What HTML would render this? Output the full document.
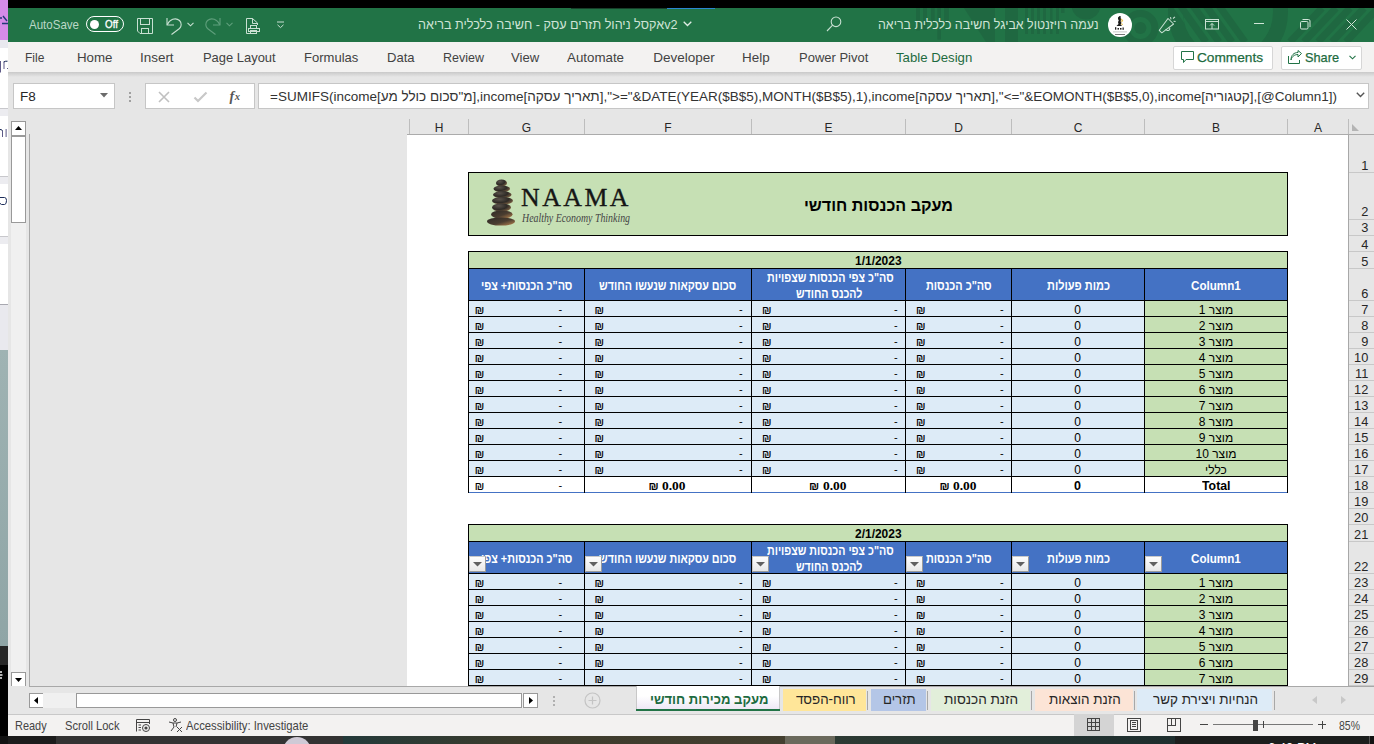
<!DOCTYPE html>
<html><head><meta charset="utf-8"><style>
html,body{margin:0;padding:0;}
body{width:1374px;height:744px;position:relative;overflow:hidden;background:#000;font-family:'Liberation Sans', sans-serif;}
.t{position:absolute;white-space:nowrap;transform-origin:0 0;}
svg{position:absolute;overflow:visible;}
</style></head><body>
<div style="position:absolute;left:0px;top:0px;width:8px;height:40px;background:#d58be8;"></div>
<svg style="left:0;top:14px" width="8" height="12" viewBox="0 0 8 12"><path d="M0 4 L2 4 M3 2 L7 7 M2 9.5 H8" stroke="#233a78" stroke-width="1.4"/></svg>
<div style="position:absolute;left:0px;top:40px;width:8px;height:8px;background:#e9e9ef;"></div>
<div style="position:absolute;left:0px;top:48px;width:8px;height:302px;background:#ffffff;"></div>
<svg style="left:0;top:55px" width="8" height="24" viewBox="0 0 8 24"><g fill="#5e5a88"><rect x="0" y="6" width="1" height="11.5"/><rect x="3.5" y="6.5" width="1" height="7.5"/><rect x="7" y="13" width="1" height="1"/></g><path d="M3.8 7 Q5 6 7.5 6.2" stroke="#102050" stroke-width="1" fill="none"/></svg>
<div style="position:absolute;left:0px;top:108px;width:8px;height:1px;background:#c8c8cc;"></div>
<div style="position:absolute;left:0px;top:109px;width:8px;height:7px;background:#ececf0;"></div>
<svg style="left:0;top:120px" width="8" height="24" viewBox="0 0 8 24"><g fill="#5e5a88"><rect x="2" y="11" width="1" height="6"/><rect x="5.6" y="9" width="1" height="8"/></g><path d="M0 9.5 Q2 9.2 2.5 11" stroke="#102050" stroke-width="1" fill="none"/></svg>
<div style="position:absolute;left:0px;top:176px;width:8px;height:1px;background:#c8c8cc;"></div>
<div style="position:absolute;left:0px;top:177px;width:8px;height:7px;background:#ececf0;"></div>
<svg style="left:0;top:188px" width="8" height="24" viewBox="0 0 8 24"><path d="M0 9.5 H4.5 Q6.5 9.5 6.5 12.5 Q6.5 16.5 4.5 16.5 H1.5 Q0.5 16.5 0 15" stroke="#1c2d5a" stroke-width="1" fill="none"/></svg>
<div style="position:absolute;left:0px;top:236px;width:8px;height:1px;background:#c8c8cc;"></div>
<div style="position:absolute;left:0px;top:237px;width:8px;height:7px;background:#ececf0;"></div>
<div style="position:absolute;left:0px;top:304px;width:8px;height:1px;background:#a8a8b0;"></div>
<div style="position:absolute;left:0px;top:305px;width:8px;height:45px;background:#e9e9ee;"></div>
<div style="position:absolute;left:0px;top:350px;width:8px;height:296px;background:linear-gradient(#9fb3b3,#8fa5a6);"></div>
<div style="position:absolute;left:0px;top:646px;width:8px;height:19px;background:#262626;"></div>
<div style="position:absolute;left:0px;top:665px;width:8px;height:79px;background:#000;"></div>
<svg style="left:0;top:670px" width="8" height="12" viewBox="0 0 8 12"><path d="M0 2 H2 M0 5 H2.5 M0 8 H2" stroke="#eee" stroke-width="1.6"/></svg>
<div style="position:absolute;left:8px;top:8px;width:1366px;height:34px;background:#217346;"></div>
<svg style="left:0;top:0" width="1374" height="42" viewBox="0 0 1374 42"><defs><clipPath id="tbc"><rect x="8" y="8" width="1366" height="34"/></clipPath><clipPath id="ringc"><circle cx="1228" cy="12" r="45"/></clipPath><clipPath id="ringo"><path d="M1228 -48 a60 60 0 1 0 0.01 0 Z M1228 -33 a45 45 0 1 1 -0.01 0 Z" clip-rule="evenodd"/></clipPath></defs><g clip-path="url(#tbc)" fill="#1f6841"><rect x="916" y="8" width="4" height="22.5"/><rect x="923" y="8" width="4" height="22"/><rect x="931" y="8" width="3.6" height="13"/><rect x="937.4" y="8" width="3.5" height="31.6"/><rect x="944.2" y="8" width="4.6" height="15"/><rect x="1005" y="8" width="13" height="34"/><rect x="1025" y="8" width="3" height="26"/><rect x="1031" y="8" width="3" height="26"/><rect x="1037" y="8" width="3" height="26"/><rect x="1043" y="8" width="3" height="26"/><rect x="1050" y="8" width="2.5" height="26"/><rect x="1056" y="8" width="3" height="26"/><rect x="1061" y="8" width="3.5" height="5"/><polygon points="964,8 995,8 995,42 986,42"/><circle cx="1086" cy="5" r="14.5"/><circle cx="1140.4" cy="28" r="6"/><circle cx="1140.4" cy="28" r="14.5" fill="none" stroke="#1f6841" stroke-width="7"/><circle cx="1228" cy="12" r="52.5" fill="none" stroke="#1f6841" stroke-width="15"/><g clip-path="url(#ringc)" stroke="#1f6841" stroke-width="7"><line x1="1176" y1="0" x2="1206" y2="42"/><line x1="1189" y1="0" x2="1219" y2="42"/><line x1="1202" y1="0" x2="1232" y2="42"/><line x1="1215" y1="0" x2="1245" y2="42"/></g><g clip-path="url(#ringo)" stroke="#217346" stroke-width="3.5"><line x1="1170" y1="0" x2="1200" y2="42"/><line x1="1183" y1="0" x2="1213" y2="42"/></g><g stroke="#1f6841" stroke-width="7"><line x1="1322" y1="8" x2="1290" y2="42"/><line x1="1336" y1="8" x2="1304" y2="42"/><line x1="1350" y1="8" x2="1318" y2="42"/><line x1="1364" y1="8" x2="1332" y2="42"/><line x1="1378" y1="8" x2="1346" y2="42"/></g></g></svg>
<div style="position:absolute;left:571px;top:8px;width:96px;height:1px;background:#17402a;"></div>
<div style="position:absolute;left:667px;top:8px;width:48px;height:1px;background:#2a86d0;"></div>
<div class="t" id="t0" style="left:29.00px;top:18.00px;font-size:13px;line-height:13px;color:#bcd8c6;font-weight:400;font-family:'Liberation Sans', sans-serif;transform:scaleX(0.8869);">AutoSave</div>
<div style="position:absolute;left:86px;top:16px;width:36px;height:14px;border:1px solid #fff;border-radius:8px;"></div>
<div style="position:absolute;left:89.5px;top:19.5px;width:9px;height:9px;border-radius:50%;background:#fff;"></div>
<div class="t" id="t1" style="left:105.00px;top:18.69px;font-size:11px;line-height:11px;color:#fff;font-weight:400;font-family:'Liberation Sans', sans-serif;transform:scaleX(0.8975);-webkit-text-stroke:0.3px #fff;">Off</div>
<svg style="left:137px;top:18px" width="17" height="17" viewBox="0 0 17 17"><g fill="none" stroke="#c8e0d2" stroke-width="1">
<path d="M0.5 0.5 H15.5 V15.5 H3 L0.5 13 Z"/><rect x="3.5" y="0.5" width="9" height="6"/><rect x="4.5" y="10.5" width="7" height="5"/></g></svg>
<svg style="left:166px;top:17px" width="17" height="19" viewBox="0 0 17 19"><g fill="none" stroke="#c8e0d2" stroke-width="1.1" stroke-linejoin="round">
<path d="M1 1 V8 H8"/><path d="M1.2 7.8 C3.5 2.5 9.5 0 13.5 3.5 C16 6 15.5 9.5 13.5 11.5 L5.5 17.5"/></g></svg>
<svg style="left:187px;top:22px" width="7" height="5" viewBox="0 0 7 5"><path d="M0.5 0.8 L3.5 3.8 L6.5 0.8" fill="none" stroke="#c8e0d2" stroke-width="1.1"/></svg>
<svg style="left:204px;top:17px" width="17" height="19" viewBox="0 0 17 19"><g fill="none" stroke="#5f9f7c" stroke-width="1.1" stroke-linejoin="round">
<path d="M16 1 V8 H9"/><path d="M15.8 7.8 C13.5 2.5 7.5 0 3.5 3.5 C1 6 1.5 9.5 3.5 11.5 L11.5 17.5"/></g></svg>
<svg style="left:226px;top:22px" width="7" height="5" viewBox="0 0 7 5"><path d="M0.5 0.8 L3.5 3.8 L6.5 0.8" fill="none" stroke="#5f9f7c" stroke-width="1.1"/></svg>
<svg style="left:246px;top:18px" width="15" height="16" viewBox="0 0 15 16"><g fill="none" stroke="#c8e0d2" stroke-width="1">
<path d="M4.5 15.5 H0.5 V0.5 H6.5 L11.5 5 V7"/><path d="M6.5 0.5 V5.5 H11.5"/><rect x="4.5" y="7.5" width="6" height="3"/><rect x="2.5" y="10.5" width="11" height="3"/><rect x="4.5" y="12.5" width="6" height="3"/></g></svg>
<svg style="left:277px;top:21px" width="8" height="8" viewBox="0 0 8 8"><g fill="none" stroke="#c8e0d2" stroke-width="1"><path d="M0 1 H7"/><path d="M0.5 3.8 L3.5 6.6 L6.5 3.8"/></g></svg>
<div class="t" id="t2" style="left:417.50px;top:19.16px;font-size:12.8px;line-height:12.8px;color:#cfe4d6;font-weight:400;font-family:'Liberation Sans', sans-serif;direction:rtl;unicode-bidi:embed;transform:scaleX(0.9864);">v2אקסל ניהול תזרים עסק  - חשיבה כלכלית בריאה</div>
<svg style="left:683px;top:21px" width="9" height="6" viewBox="0 0 9 6"><path d="M0.7 0.7 L4.5 4.5 L8.3 0.7" fill="none" stroke="#e0ede5" stroke-width="1.3"/></svg>
<svg style="left:826px;top:16px" width="16" height="16" viewBox="0 0 16 16"><g fill="none" stroke="#c8e0d2" stroke-width="1.1"><circle cx="10" cy="5.8" r="4.8"/><path d="M6.6 9.2 L1 15"/></g></svg>
<div class="t" id="t3" style="left:878.00px;top:19.16px;font-size:12.8px;line-height:12.8px;color:#cfe4d6;font-weight:400;font-family:'Liberation Sans', sans-serif;direction:rtl;unicode-bidi:embed;transform:scaleX(0.9705);">נעמה רויזנטול אביגל חשיבה כלכלית בריאה</div>
<div style="position:absolute;left:1108px;top:13px;width:24px;height:24px;border-radius:50%;background:#fff;"></div>
<svg style="left:1108px;top:13px" width="24" height="24" viewBox="0 0 24 24">
<path d="M10 4.5 L11.5 3 L13 3.5 L12.5 5 L13.5 6.5 L12.5 8 L13.5 10 L12.5 11.5 L14 12.5 L13 13 H8.5 L9.5 12 L10.5 11 L10 9 L10.8 7.5 L10 6 Z" fill="#1a1a1a"/>
<path d="M13 6 L14.5 7.5 L13.5 9 M13.5 10.5 L14.5 12" stroke="#e8c050" stroke-width="1.2" fill="none"/>
<g fill="#222"><rect x="7" y="14.2" width="1.3" height="2.5"/><rect x="9.5" y="15" width="1.5" height="1.6"/><rect x="12" y="15" width="1.5" height="1.6"/><rect x="14.5" y="14.5" width="1.3" height="2.3"/></g>
<rect x="5" y="18.5" width="14" height="0.8" fill="#bbb"/><rect x="7" y="21" width="10" height="0.9" fill="#666"/></svg>
<svg style="left:1156px;top:14px" width="22" height="22" viewBox="1156 14 22 22"><g fill="none" stroke="#c8e0d2" stroke-width="1.05" stroke-linejoin="round">
<path d="M1159.3 30.3 L1168 18.5 L1173.6 24 L1161.8 32.8 Z"/><path d="M1165.8 29.2 A1.9 1.9 0 0 0 1169.6 28"/>
<path d="M1170.5 17.2 L1171 19.3 M1173 18.5 L1175 16.8 M1173.6 21.2 L1175.6 21.6"/></g></svg>
<svg style="left:1205px;top:18px" width="15" height="12" viewBox="0 0 15 12"><g fill="none" stroke="#c8e0d2" stroke-width="1"><rect x="0.5" y="1.5" width="13" height="9.5"/><path d="M0.5 3.5 H13.5"/><path d="M7 11 V5.5 M5 7.5 L7 5.5 L9 7.5"/></g></svg>
<div style="position:absolute;left:1254px;top:23px;width:10px;height:1px;background:#d0e6d8;"></div>
<svg style="left:1299px;top:18px" width="13" height="13" viewBox="0 0 13 13"><g fill="none" stroke="#d0e6d8" stroke-width="1"><rect x="1.5" y="3.5" width="7.5" height="7.5" rx="1.2"/><path d="M3.5 1.5 H9.5 a1.5 1.5 0 0 1 1.5 1.5 V9"/></g></svg>
<svg style="left:1346px;top:19px" width="11" height="11" viewBox="0 0 11 11"><path d="M0.5 0.5 L10.5 10.5 M10.5 0.5 L0.5 10.5" stroke="#d0e6d8" stroke-width="1"/></svg>
<div style="position:absolute;left:8px;top:42px;width:1366px;height:30px;background:#f3f2f1;"></div>
<div class="t" id="t4" style="left:24.50px;top:51.07px;font-size:13.5px;line-height:13.5px;color:#424242;font-weight:400;font-family:'Liberation Sans', sans-serif;transform:scaleX(0.8913);">File</div>
<div class="t" id="t5" style="left:76.70px;top:51.07px;font-size:13.5px;line-height:13.5px;color:#424242;font-weight:400;font-family:'Liberation Sans', sans-serif;transform:scaleX(0.9857);">Home</div>
<div class="t" id="t6" style="left:140.20px;top:51.07px;font-size:13.5px;line-height:13.5px;color:#424242;font-weight:400;font-family:'Liberation Sans', sans-serif;transform:scaleX(0.9951);">Insert</div>
<div class="t" id="t7" style="left:203.20px;top:51.07px;font-size:13.5px;line-height:13.5px;color:#424242;font-weight:400;font-family:'Liberation Sans', sans-serif;transform:scaleX(0.9576);">Page Layout</div>
<div class="t" id="t8" style="left:304.20px;top:51.07px;font-size:13.5px;line-height:13.5px;color:#424242;font-weight:400;font-family:'Liberation Sans', sans-serif;transform:scaleX(0.9651);">Formulas</div>
<div class="t" id="t9" style="left:386.50px;top:51.07px;font-size:13.5px;line-height:13.5px;color:#424242;font-weight:400;font-family:'Liberation Sans', sans-serif;transform:scaleX(0.9674);">Data</div>
<div class="t" id="t10" style="left:442.60px;top:51.07px;font-size:13.5px;line-height:13.5px;color:#424242;font-weight:400;font-family:'Liberation Sans', sans-serif;transform:scaleX(0.9262);">Review</div>
<div class="t" id="t11" style="left:510.60px;top:51.07px;font-size:13.5px;line-height:13.5px;color:#424242;font-weight:400;font-family:'Liberation Sans', sans-serif;transform:scaleX(0.9714);">View</div>
<div class="t" id="t12" style="left:567.20px;top:51.07px;font-size:13.5px;line-height:13.5px;color:#424242;font-weight:400;font-family:'Liberation Sans', sans-serif;transform:scaleX(0.9862);">Automate</div>
<div class="t" id="t13" style="left:653.20px;top:51.07px;font-size:13.5px;line-height:13.5px;color:#424242;font-weight:400;font-family:'Liberation Sans', sans-serif;">Developer</div>
<div class="t" id="t14" style="left:741.60px;top:51.07px;font-size:13.5px;line-height:13.5px;color:#424242;font-weight:400;font-family:'Liberation Sans', sans-serif;transform:scaleX(0.9940);">Help</div>
<div class="t" id="t15" style="left:798.70px;top:51.07px;font-size:13.5px;line-height:13.5px;color:#424242;font-weight:400;font-family:'Liberation Sans', sans-serif;transform:scaleX(0.9621);">Power Pivot</div>
<div class="t" id="t16" style="left:896.20px;top:51.07px;font-size:13.5px;line-height:13.5px;color:#1d6b40;font-weight:400;font-family:'Liberation Sans', sans-serif;transform:scaleX(0.9776);">Table Design</div>
<div style="position:absolute;left:1173px;top:46px;width:98px;height:22px;border:1px solid #d6d6d6;border-radius:2px;background:#fff;"></div>
<svg style="left:1181px;top:50px" width="14" height="14" viewBox="0 0 14 14"><path d="M0.5 1.5 H12.5 V9.5 H5 L2.5 12.5 V9.5 H0.5 Z" fill="none" stroke="#217346" stroke-width="1"/></svg>
<div class="t" id="t17" style="left:1197.00px;top:51.07px;font-size:13.5px;line-height:13.5px;color:#1d6b40;font-weight:400;font-family:'Liberation Sans', sans-serif;transform:scaleX(1.0113);-webkit-text-stroke:0.25px #1d6b40;">Comments</div>
<div style="position:absolute;left:1281px;top:46px;width:79px;height:22px;border:1px solid #d6d6d6;border-radius:2px;background:#fff;"></div>
<svg style="left:1288px;top:50px" width="14" height="14" viewBox="0 0 14 14"><g fill="none" stroke="#217346" stroke-width="1"><path d="M0.5 6 V13.5 H11.5 V10"/><path d="M3 10 C4 6 7 4.5 10 4.5 V7 L13.5 3.5 L10 0.5 V2.5 C6 2.5 3 5 3 10 Z"/></g></svg>
<div class="t" id="t18" style="left:1305.00px;top:51.07px;font-size:13.5px;line-height:13.5px;color:#1d6b40;font-weight:400;font-family:'Liberation Sans', sans-serif;transform:scaleX(0.9436);-webkit-text-stroke:0.25px #1d6b40;">Share</div>
<svg style="left:1349px;top:55px" width="7" height="5" viewBox="0 0 7 5"><path d="M0.5 0.8 L3.5 3.8 L6.5 0.8" fill="none" stroke="#217346" stroke-width="1.1"/></svg>
<div style="position:absolute;left:8px;top:72px;width:1366px;height:47px;background:#e6e6e6;"></div>
<div style="position:absolute;left:8px;top:72px;width:1366px;height:5px;background:linear-gradient(#c9c9c9,#e6e6e6);"></div>
<div style="position:absolute;left:13px;top:83px;width:100px;height:24px;border:1px solid #c6c6c6;background:#fff;"></div>
<div class="t" id="t19" style="left:20.00px;top:89.57px;font-size:13.5px;line-height:13.5px;color:#262626;font-weight:400;font-family:'Liberation Sans', sans-serif;">F8</div>
<svg style="left:100px;top:93px" width="8" height="5" viewBox="0 0 8 5"><path d="M0 0 H8 L4 4.5 Z" fill="#6b6b6b"/></svg>
<div style="position:absolute;left:129px;top:92px;width:2px;height:2px;background:#a0a0a0;"></div>
<div style="position:absolute;left:129px;top:96px;width:2px;height:2px;background:#a0a0a0;"></div>
<div style="position:absolute;left:129px;top:100px;width:2px;height:2px;background:#a0a0a0;"></div>
<div style="position:absolute;left:145px;top:83px;width:108px;height:24px;border:1px solid #c6c6c6;background:#fff;"></div>
<svg style="left:158px;top:91px" width="12" height="12" viewBox="0 0 12 12"><path d="M1 1 L11 11 M11 1 L1 11" stroke="#c0c0c0" stroke-width="1.6"/></svg>
<svg style="left:193px;top:91px" width="15" height="12" viewBox="0 0 15 12"><path d="M1.5 6.5 L5 10 L13.5 1.5" fill="none" stroke="#c8c8c8" stroke-width="2.2"/></svg>
<div class="t" id="t20" style="left:229.50px;top:89.65px;font-size:14px;line-height:14px;color:#555;font-weight:700;font-family:'Liberation Serif', serif;font-style:italic;">f</div>
<div class="t" id="t21" style="left:234.80px;top:91.61px;font-size:10.5px;line-height:10.5px;color:#555;font-weight:700;font-family:'Liberation Serif', serif;font-style:italic;">x</div>
<div style="position:absolute;left:258px;top:83px;width:1109px;height:24px;border:1px solid #c6c6c6;background:#fff;"></div>
<div class="t" id="t22" style="left:270.00px;top:89.57px;font-size:13.5px;line-height:13.5px;color:#333333;font-weight:400;font-family:'Liberation Sans', sans-serif;">=SUMIFS(income[מ"סכום כולל מע],income[תאריך עסקה],"&gt;="&amp;DATE(YEAR($B$5),MONTH($B$5),1),income[תאריך עסקה],"&lt;="&amp;EOMONTH($B$5,0),income[קטגוריה],[@Column1])</div>
<svg style="left:1356px;top:92px" width="9" height="6" viewBox="0 0 9 6"><path d="M0.8 0.8 L4.5 4.5 L8.2 0.8" fill="none" stroke="#555" stroke-width="1.4"/></svg>
<div style="position:absolute;left:8px;top:119px;width:1366px;height:16px;background:#e6e6e6;"></div>
<div style="position:absolute;left:407px;top:134px;width:967px;height:1px;background:#ababab;"></div>
<div style="position:absolute;left:409px;top:119px;width:1px;height:15px;background:#bdbdbd;"></div>
<div style="position:absolute;left:468px;top:119px;width:1px;height:15px;background:#bdbdbd;"></div>
<div style="position:absolute;left:584px;top:119px;width:1px;height:15px;background:#bdbdbd;"></div>
<div style="position:absolute;left:751px;top:119px;width:1px;height:15px;background:#bdbdbd;"></div>
<div style="position:absolute;left:905px;top:119px;width:1px;height:15px;background:#bdbdbd;"></div>
<div style="position:absolute;left:1011px;top:119px;width:1px;height:15px;background:#bdbdbd;"></div>
<div style="position:absolute;left:1144px;top:119px;width:1px;height:15px;background:#bdbdbd;"></div>
<div style="position:absolute;left:1287px;top:119px;width:1px;height:15px;background:#bdbdbd;"></div>
<div style="position:absolute;left:1348px;top:119px;width:1px;height:15px;background:#bdbdbd;"></div>
<div class="t" id="t23" style="left:434.66px;top:121.84px;font-size:12px;line-height:12px;color:#262626;font-weight:400;font-family:'Liberation Sans', sans-serif;">H</div>
<div class="t" id="t24" style="left:521.83px;top:121.84px;font-size:12px;line-height:12px;color:#262626;font-weight:400;font-family:'Liberation Sans', sans-serif;">G</div>
<div class="t" id="t25" style="left:664.33px;top:121.84px;font-size:12px;line-height:12px;color:#262626;font-weight:400;font-family:'Liberation Sans', sans-serif;">F</div>
<div class="t" id="t26" style="left:824.49px;top:121.84px;font-size:12px;line-height:12px;color:#262626;font-weight:400;font-family:'Liberation Sans', sans-serif;">E</div>
<div class="t" id="t27" style="left:954.16px;top:121.84px;font-size:12px;line-height:12px;color:#262626;font-weight:400;font-family:'Liberation Sans', sans-serif;">D</div>
<div class="t" id="t28" style="left:1073.66px;top:121.84px;font-size:12px;line-height:12px;color:#262626;font-weight:400;font-family:'Liberation Sans', sans-serif;">C</div>
<div class="t" id="t29" style="left:1211.99px;top:121.84px;font-size:12px;line-height:12px;color:#262626;font-weight:400;font-family:'Liberation Sans', sans-serif;">B</div>
<div class="t" id="t30" style="left:1313.99px;top:121.84px;font-size:12px;line-height:12px;color:#262626;font-weight:400;font-family:'Liberation Sans', sans-serif;">A</div>
<svg style="left:1352px;top:124px" width="7" height="7" viewBox="0 0 7 7"><path d="M0 0 V7 H7 Z" fill="#b4b4b4"/></svg>
<div style="position:absolute;left:8px;top:135px;width:1366px;height:551px;background:#e6e6e6;"></div>
<div style="position:absolute;left:407px;top:135px;width:941px;height:551px;background:#ffffff;"></div>
<div style="position:absolute;left:29px;top:134px;width:1px;height:552px;background:#a8a8a8;"></div>
<div style="position:absolute;left:11px;top:121px;width:15px;height:565px;background:#f0f0f0;"></div>
<div style="position:absolute;left:11px;top:121px;width:13px;height:13px;border:1px solid #999;background:#fff;"></div>
<svg style="left:15px;top:126px" width="7" height="4" viewBox="0 0 7 4"><path d="M0 4 H7 L3.5 0 Z" fill="#000"/></svg>
<div style="position:absolute;left:11px;top:135px;width:13px;height:85px;border:1px solid #999;border-top:2px solid #999;background:#fff;"></div>
<div style="position:absolute;left:11px;top:672px;width:13px;height:13px;border:1px solid #999;background:#fff;"></div>
<svg style="left:15px;top:678px" width="7" height="4" viewBox="0 0 7 4"><path d="M0 0 H7 L3.5 4 Z" fill="#000"/></svg>
<div style="position:absolute;left:1348px;top:135px;width:26px;height:551px;background:#e6e6e6;"></div>
<div style="position:absolute;left:1348px;top:135px;width:1px;height:551px;background:#a8a8a8;"></div>
<div style="position:absolute;left:1349px;top:172px;width:25px;height:1px;background:#c8c8c8;"></div>
<div class="t" id="t31" style="left:1361.17px;top:159.66px;font-size:12.8px;line-height:12.8px;color:#262626;font-weight:400;font-family:'Liberation Sans', sans-serif;">1</div>
<div style="position:absolute;left:1349px;top:219px;width:25px;height:1px;background:#c8c8c8;"></div>
<div class="t" id="t32" style="left:1361.17px;top:206.16px;font-size:12.8px;line-height:12.8px;color:#262626;font-weight:400;font-family:'Liberation Sans', sans-serif;">2</div>
<div style="position:absolute;left:1349px;top:235px;width:25px;height:1px;background:#c8c8c8;"></div>
<div class="t" id="t33" style="left:1361.17px;top:222.16px;font-size:12.8px;line-height:12.8px;color:#262626;font-weight:400;font-family:'Liberation Sans', sans-serif;">3</div>
<div style="position:absolute;left:1349px;top:251px;width:25px;height:1px;background:#c8c8c8;"></div>
<div class="t" id="t34" style="left:1361.17px;top:238.66px;font-size:12.8px;line-height:12.8px;color:#262626;font-weight:400;font-family:'Liberation Sans', sans-serif;">4</div>
<div style="position:absolute;left:1349px;top:268px;width:25px;height:1px;background:#c8c8c8;"></div>
<div class="t" id="t35" style="left:1361.17px;top:255.66px;font-size:12.8px;line-height:12.8px;color:#262626;font-weight:400;font-family:'Liberation Sans', sans-serif;">5</div>
<div style="position:absolute;left:1349px;top:300px;width:25px;height:1px;background:#c8c8c8;"></div>
<div class="t" id="t36" style="left:1361.17px;top:287.66px;font-size:12.8px;line-height:12.8px;color:#262626;font-weight:400;font-family:'Liberation Sans', sans-serif;">6</div>
<div style="position:absolute;left:1349px;top:316px;width:25px;height:1px;background:#c8c8c8;"></div>
<div class="t" id="t37" style="left:1361.17px;top:303.66px;font-size:12.8px;line-height:12.8px;color:#262626;font-weight:400;font-family:'Liberation Sans', sans-serif;">7</div>
<div style="position:absolute;left:1349px;top:332px;width:25px;height:1px;background:#c8c8c8;"></div>
<div class="t" id="t38" style="left:1361.17px;top:319.66px;font-size:12.8px;line-height:12.8px;color:#262626;font-weight:400;font-family:'Liberation Sans', sans-serif;">8</div>
<div style="position:absolute;left:1349px;top:348px;width:25px;height:1px;background:#c8c8c8;"></div>
<div class="t" id="t39" style="left:1361.17px;top:335.66px;font-size:12.8px;line-height:12.8px;color:#262626;font-weight:400;font-family:'Liberation Sans', sans-serif;">9</div>
<div style="position:absolute;left:1349px;top:364px;width:25px;height:1px;background:#c8c8c8;"></div>
<div class="t" id="t40" style="left:1354.07px;top:351.66px;font-size:12.8px;line-height:12.8px;color:#262626;font-weight:400;font-family:'Liberation Sans', sans-serif;">10</div>
<div style="position:absolute;left:1349px;top:380px;width:25px;height:1px;background:#c8c8c8;"></div>
<div class="t" id="t41" style="left:1355.00px;top:367.66px;font-size:12.8px;line-height:12.8px;color:#262626;font-weight:400;font-family:'Liberation Sans', sans-serif;">11</div>
<div style="position:absolute;left:1349px;top:396px;width:25px;height:1px;background:#c8c8c8;"></div>
<div class="t" id="t42" style="left:1354.07px;top:383.66px;font-size:12.8px;line-height:12.8px;color:#262626;font-weight:400;font-family:'Liberation Sans', sans-serif;">12</div>
<div style="position:absolute;left:1349px;top:412px;width:25px;height:1px;background:#c8c8c8;"></div>
<div class="t" id="t43" style="left:1354.07px;top:399.66px;font-size:12.8px;line-height:12.8px;color:#262626;font-weight:400;font-family:'Liberation Sans', sans-serif;">13</div>
<div style="position:absolute;left:1349px;top:428px;width:25px;height:1px;background:#c8c8c8;"></div>
<div class="t" id="t44" style="left:1354.07px;top:415.66px;font-size:12.8px;line-height:12.8px;color:#262626;font-weight:400;font-family:'Liberation Sans', sans-serif;">14</div>
<div style="position:absolute;left:1349px;top:444px;width:25px;height:1px;background:#c8c8c8;"></div>
<div class="t" id="t45" style="left:1354.07px;top:431.66px;font-size:12.8px;line-height:12.8px;color:#262626;font-weight:400;font-family:'Liberation Sans', sans-serif;">15</div>
<div style="position:absolute;left:1349px;top:460px;width:25px;height:1px;background:#c8c8c8;"></div>
<div class="t" id="t46" style="left:1354.07px;top:447.66px;font-size:12.8px;line-height:12.8px;color:#262626;font-weight:400;font-family:'Liberation Sans', sans-serif;">16</div>
<div style="position:absolute;left:1349px;top:476px;width:25px;height:1px;background:#c8c8c8;"></div>
<div class="t" id="t47" style="left:1354.07px;top:463.66px;font-size:12.8px;line-height:12.8px;color:#262626;font-weight:400;font-family:'Liberation Sans', sans-serif;">17</div>
<div style="position:absolute;left:1349px;top:492px;width:25px;height:1px;background:#c8c8c8;"></div>
<div class="t" id="t48" style="left:1354.07px;top:479.66px;font-size:12.8px;line-height:12.8px;color:#262626;font-weight:400;font-family:'Liberation Sans', sans-serif;">18</div>
<div style="position:absolute;left:1349px;top:508px;width:25px;height:1px;background:#c8c8c8;"></div>
<div class="t" id="t49" style="left:1354.07px;top:495.66px;font-size:12.8px;line-height:12.8px;color:#262626;font-weight:400;font-family:'Liberation Sans', sans-serif;">19</div>
<div style="position:absolute;left:1349px;top:524px;width:25px;height:1px;background:#c8c8c8;"></div>
<div class="t" id="t50" style="left:1354.07px;top:511.66px;font-size:12.8px;line-height:12.8px;color:#262626;font-weight:400;font-family:'Liberation Sans', sans-serif;">20</div>
<div style="position:absolute;left:1349px;top:541px;width:25px;height:1px;background:#c8c8c8;"></div>
<div class="t" id="t51" style="left:1354.07px;top:528.66px;font-size:12.8px;line-height:12.8px;color:#262626;font-weight:400;font-family:'Liberation Sans', sans-serif;">21</div>
<div style="position:absolute;left:1349px;top:573px;width:25px;height:1px;background:#c8c8c8;"></div>
<div class="t" id="t52" style="left:1354.07px;top:560.66px;font-size:12.8px;line-height:12.8px;color:#262626;font-weight:400;font-family:'Liberation Sans', sans-serif;">22</div>
<div style="position:absolute;left:1349px;top:589px;width:25px;height:1px;background:#c8c8c8;"></div>
<div class="t" id="t53" style="left:1354.07px;top:576.66px;font-size:12.8px;line-height:12.8px;color:#262626;font-weight:400;font-family:'Liberation Sans', sans-serif;">23</div>
<div style="position:absolute;left:1349px;top:605px;width:25px;height:1px;background:#c8c8c8;"></div>
<div class="t" id="t54" style="left:1354.07px;top:592.66px;font-size:12.8px;line-height:12.8px;color:#262626;font-weight:400;font-family:'Liberation Sans', sans-serif;">24</div>
<div style="position:absolute;left:1349px;top:621px;width:25px;height:1px;background:#c8c8c8;"></div>
<div class="t" id="t55" style="left:1354.07px;top:608.66px;font-size:12.8px;line-height:12.8px;color:#262626;font-weight:400;font-family:'Liberation Sans', sans-serif;">25</div>
<div style="position:absolute;left:1349px;top:637px;width:25px;height:1px;background:#c8c8c8;"></div>
<div class="t" id="t56" style="left:1354.07px;top:624.66px;font-size:12.8px;line-height:12.8px;color:#262626;font-weight:400;font-family:'Liberation Sans', sans-serif;">26</div>
<div style="position:absolute;left:1349px;top:653px;width:25px;height:1px;background:#c8c8c8;"></div>
<div class="t" id="t57" style="left:1354.07px;top:640.66px;font-size:12.8px;line-height:12.8px;color:#262626;font-weight:400;font-family:'Liberation Sans', sans-serif;">27</div>
<div style="position:absolute;left:1349px;top:669px;width:25px;height:1px;background:#c8c8c8;"></div>
<div class="t" id="t58" style="left:1354.07px;top:656.66px;font-size:12.8px;line-height:12.8px;color:#262626;font-weight:400;font-family:'Liberation Sans', sans-serif;">28</div>
<div style="position:absolute;left:1349px;top:685px;width:25px;height:1px;background:#c8c8c8;"></div>
<div class="t" id="t59" style="left:1354.07px;top:672.66px;font-size:12.8px;line-height:12.8px;color:#262626;font-weight:400;font-family:'Liberation Sans', sans-serif;">29</div>
<div style="position:absolute;left:468px;top:172px;width:820px;height:64px;background:#000;"></div>
<div style="position:absolute;left:469px;top:173px;width:818px;height:62px;background:#c6e0b4;"></div>
<svg style="left:0;top:0" width="1374" height="744" viewBox="0 0 1374 744"><defs><radialGradient id="stg" cx="0.35" cy="0.3" r="0.8"><stop offset="0" stop-color="#5a534b"/><stop offset="0.55" stop-color="#2e2a26"/><stop offset="1" stop-color="#8a6a48"/></radialGradient><linearGradient id="stb" x1="0" x2="1" y1="0" y2="1"><stop offset="0" stop-color="#2e2a26"/><stop offset="0.55" stop-color="#4a3d30"/><stop offset="1" stop-color="#c08850"/></linearGradient></defs><ellipse cx="501.5" cy="183.0" rx="5.5" ry="3.6" fill="url(#stg)"/><ellipse cx="501.75" cy="188.85" rx="8.25" ry="3.4499999999999944" fill="url(#stg)"/><ellipse cx="502.3" cy="194.64999999999998" rx="9.300000000000011" ry="3.550000000000003" fill="url(#stg)"/><ellipse cx="502.5" cy="200.8" rx="10.5" ry="3.800000000000003" fill="url(#stg)"/><ellipse cx="501.5" cy="207.5" rx="9.5" ry="4.1" fill="url(#stg)"/><ellipse cx="501.8" cy="214.5" rx="10.800000000000011" ry="4.1" fill="url(#stb)"/><ellipse cx="501.0" cy="221.5" rx="14.0" ry="4.1" fill="url(#stb)"/></svg>
<div class="t" id="t60" style="left:520.50px;top:184.99px;font-size:26px;line-height:26px;color:#161616;font-weight:400;font-family:'Liberation Serif', serif;transform:scaleX(0.9934);letter-spacing:2.5px;-webkit-text-stroke:0.35px #161616;">NAAMA</div>
<div class="t" id="t61" style="left:521.50px;top:211.07px;font-size:13.5px;line-height:13.5px;color:#454545;font-weight:400;font-family:'Liberation Serif', serif;transform:scaleX(0.7311);font-style:italic;">Healthy Economy Thinking</div>
<div class="t" id="t62" style="left:804.00px;top:197.03px;font-size:16.5px;line-height:16.5px;color:#000;font-weight:700;font-family:'Liberation Sans', sans-serif;direction:rtl;unicode-bidi:embed;transform:scaleX(0.9758);">מעקב הכנסות חודשי</div>
<div style="position:absolute;left:468px;top:251px;width:820px;height:1px;background:#000;"></div>
<div style="position:absolute;left:468px;top:252px;width:820px;height:16px;background:#c6e0b4;"></div>
<div style="position:absolute;left:468px;top:268px;width:820px;height:1px;background:#000;"></div>
<div style="position:absolute;left:468px;top:269px;width:820px;height:31px;background:#4472c4;"></div>
<div style="position:absolute;left:468px;top:300px;width:820px;height:1px;background:#000;"></div>
<div style="position:absolute;left:468px;top:301px;width:677px;height:15px;background:#ddebf7;"></div>
<div style="position:absolute;left:1144px;top:301px;width:144px;height:15px;background:#c6e0b4;"></div>
<div style="position:absolute;left:468px;top:316px;width:820px;height:1px;background:#000;"></div>
<div style="position:absolute;left:468px;top:317px;width:677px;height:15px;background:#ddebf7;"></div>
<div style="position:absolute;left:1144px;top:317px;width:144px;height:15px;background:#c6e0b4;"></div>
<div style="position:absolute;left:468px;top:332px;width:820px;height:1px;background:#000;"></div>
<div style="position:absolute;left:468px;top:333px;width:677px;height:15px;background:#ddebf7;"></div>
<div style="position:absolute;left:1144px;top:333px;width:144px;height:15px;background:#c6e0b4;"></div>
<div style="position:absolute;left:468px;top:348px;width:820px;height:1px;background:#000;"></div>
<div style="position:absolute;left:468px;top:349px;width:677px;height:15px;background:#ddebf7;"></div>
<div style="position:absolute;left:1144px;top:349px;width:144px;height:15px;background:#c6e0b4;"></div>
<div style="position:absolute;left:468px;top:364px;width:820px;height:1px;background:#000;"></div>
<div style="position:absolute;left:468px;top:365px;width:677px;height:15px;background:#ddebf7;"></div>
<div style="position:absolute;left:1144px;top:365px;width:144px;height:15px;background:#c6e0b4;"></div>
<div style="position:absolute;left:468px;top:380px;width:820px;height:1px;background:#000;"></div>
<div style="position:absolute;left:468px;top:381px;width:677px;height:15px;background:#ddebf7;"></div>
<div style="position:absolute;left:1144px;top:381px;width:144px;height:15px;background:#c6e0b4;"></div>
<div style="position:absolute;left:468px;top:396px;width:820px;height:1px;background:#000;"></div>
<div style="position:absolute;left:468px;top:397px;width:677px;height:15px;background:#ddebf7;"></div>
<div style="position:absolute;left:1144px;top:397px;width:144px;height:15px;background:#c6e0b4;"></div>
<div style="position:absolute;left:468px;top:412px;width:820px;height:1px;background:#000;"></div>
<div style="position:absolute;left:468px;top:413px;width:677px;height:15px;background:#ddebf7;"></div>
<div style="position:absolute;left:1144px;top:413px;width:144px;height:15px;background:#c6e0b4;"></div>
<div style="position:absolute;left:468px;top:428px;width:820px;height:1px;background:#000;"></div>
<div style="position:absolute;left:468px;top:429px;width:677px;height:15px;background:#ddebf7;"></div>
<div style="position:absolute;left:1144px;top:429px;width:144px;height:15px;background:#c6e0b4;"></div>
<div style="position:absolute;left:468px;top:444px;width:820px;height:1px;background:#000;"></div>
<div style="position:absolute;left:468px;top:445px;width:677px;height:15px;background:#ddebf7;"></div>
<div style="position:absolute;left:1144px;top:445px;width:144px;height:15px;background:#c6e0b4;"></div>
<div style="position:absolute;left:468px;top:460px;width:820px;height:1px;background:#000;"></div>
<div style="position:absolute;left:468px;top:461px;width:677px;height:15px;background:#ddebf7;"></div>
<div style="position:absolute;left:1144px;top:461px;width:144px;height:15px;background:#c6e0b4;"></div>
<div style="position:absolute;left:468px;top:476px;width:820px;height:1px;background:#000;"></div>
<div style="position:absolute;left:468px;top:477px;width:820px;height:15px;background:#fff;"></div>
<div style="position:absolute;left:468px;top:492px;width:820px;height:1px;background:#4472c4;"></div>
<div style="position:absolute;left:468px;top:268px;width:1px;height:225px;background:#000;"></div>
<div style="position:absolute;left:584px;top:268px;width:1px;height:225px;background:#000;"></div>
<div style="position:absolute;left:751px;top:268px;width:1px;height:225px;background:#000;"></div>
<div style="position:absolute;left:905px;top:268px;width:1px;height:225px;background:#000;"></div>
<div style="position:absolute;left:1011px;top:268px;width:1px;height:225px;background:#000;"></div>
<div style="position:absolute;left:1144px;top:268px;width:1px;height:225px;background:#000;"></div>
<div style="position:absolute;left:1287px;top:268px;width:1px;height:225px;background:#000;"></div>
<div style="position:absolute;left:468px;top:251px;width:1px;height:17px;background:#000;"></div>
<div style="position:absolute;left:1287px;top:251px;width:1px;height:17px;background:#000;"></div>
<div class="t" id="t63" style="left:854.70px;top:255.42px;font-size:12.5px;line-height:12.5px;color:#000;font-weight:700;font-family:'Liberation Sans', sans-serif;transform:scaleX(0.9574);">1/1/2023</div>
<div class="t" id="t64" style="left:480.90px;top:279.66px;font-size:12.8px;line-height:12.8px;color:#ffffff;font-weight:700;font-family:'Liberation Sans', sans-serif;direction:rtl;unicode-bidi:embed;transform:scaleX(0.8430);">סה"כ הכנסות+ צפי</div>
<div class="t" id="t65" style="left:598.80px;top:279.66px;font-size:12.8px;line-height:12.8px;color:#ffffff;font-weight:700;font-family:'Liberation Sans', sans-serif;direction:rtl;unicode-bidi:embed;transform:scaleX(0.8391);">סכום עסקאות שנעשו החודש</div>
<div class="t" id="t66" style="left:766.50px;top:271.66px;font-size:12.8px;line-height:12.8px;color:#ffffff;font-weight:700;font-family:'Liberation Sans', sans-serif;direction:rtl;unicode-bidi:embed;transform:scaleX(0.8345);">סה"כ צפי הכנסות שצפויות</div>
<div class="t" id="t67" style="left:795.50px;top:287.66px;font-size:12.8px;line-height:12.8px;color:#ffffff;font-weight:700;font-family:'Liberation Sans', sans-serif;direction:rtl;unicode-bidi:embed;transform:scaleX(0.8297);">להכנס החודש</div>
<div class="t" id="t68" style="left:925.50px;top:279.66px;font-size:12.8px;line-height:12.8px;color:#ffffff;font-weight:700;font-family:'Liberation Sans', sans-serif;direction:rtl;unicode-bidi:embed;transform:scaleX(0.8476);">סה"כ הכנסות</div>
<div class="t" id="t69" style="left:1046.50px;top:279.66px;font-size:12.8px;line-height:12.8px;color:#ffffff;font-weight:700;font-family:'Liberation Sans', sans-serif;direction:rtl;unicode-bidi:embed;transform:scaleX(0.8577);">כמות פעולות</div>
<div class="t" id="t70" style="left:1190.50px;top:279.66px;font-size:12.8px;line-height:12.8px;color:#ffffff;font-weight:700;font-family:'Liberation Sans', sans-serif;transform:scaleX(0.9078);">Column1</div>
<div class="t" id="t71" style="left:474.70px;top:304.82px;font-size:11.2px;line-height:11.2px;color:#000;font-weight:400;font-family:'Liberation Sans', sans-serif;-webkit-text-stroke:0.1px #000;">₪</div>
<div class="t" id="t72" style="left:558.60px;top:303.69px;font-size:11px;line-height:11px;color:#000;font-weight:400;font-family:'Liberation Sans', sans-serif;">-</div>
<div class="t" id="t73" style="left:594.60px;top:304.82px;font-size:11.2px;line-height:11.2px;color:#000;font-weight:400;font-family:'Liberation Sans', sans-serif;-webkit-text-stroke:0.1px #000;">₪</div>
<div class="t" id="t74" style="left:738.90px;top:303.69px;font-size:11px;line-height:11px;color:#000;font-weight:400;font-family:'Liberation Sans', sans-serif;">-</div>
<div class="t" id="t75" style="left:762.00px;top:304.82px;font-size:11.2px;line-height:11.2px;color:#000;font-weight:400;font-family:'Liberation Sans', sans-serif;-webkit-text-stroke:0.1px #000;">₪</div>
<div class="t" id="t76" style="left:893.90px;top:303.69px;font-size:11px;line-height:11px;color:#000;font-weight:400;font-family:'Liberation Sans', sans-serif;">-</div>
<div class="t" id="t77" style="left:916.00px;top:304.82px;font-size:11.2px;line-height:11.2px;color:#000;font-weight:400;font-family:'Liberation Sans', sans-serif;-webkit-text-stroke:0.1px #000;">₪</div>
<div class="t" id="t78" style="left:1000.00px;top:303.69px;font-size:11px;line-height:11px;color:#000;font-weight:400;font-family:'Liberation Sans', sans-serif;">-</div>
<div class="t" id="t79" style="left:1074.26px;top:304.04px;font-size:12px;line-height:12px;color:#000;font-weight:400;font-family:'Liberation Sans', sans-serif;">0</div>
<div class="t" id="t80" style="left:1198.83px;top:304.04px;font-size:12px;line-height:12px;color:#000;font-weight:400;font-family:'Liberation Sans', sans-serif;direction:rtl;unicode-bidi:embed;">מוצר 1</div>
<div class="t" id="t81" style="left:474.70px;top:320.82px;font-size:11.2px;line-height:11.2px;color:#000;font-weight:400;font-family:'Liberation Sans', sans-serif;-webkit-text-stroke:0.1px #000;">₪</div>
<div class="t" id="t82" style="left:558.60px;top:319.69px;font-size:11px;line-height:11px;color:#000;font-weight:400;font-family:'Liberation Sans', sans-serif;">-</div>
<div class="t" id="t83" style="left:594.60px;top:320.82px;font-size:11.2px;line-height:11.2px;color:#000;font-weight:400;font-family:'Liberation Sans', sans-serif;-webkit-text-stroke:0.1px #000;">₪</div>
<div class="t" id="t84" style="left:738.90px;top:319.69px;font-size:11px;line-height:11px;color:#000;font-weight:400;font-family:'Liberation Sans', sans-serif;">-</div>
<div class="t" id="t85" style="left:762.00px;top:320.82px;font-size:11.2px;line-height:11.2px;color:#000;font-weight:400;font-family:'Liberation Sans', sans-serif;-webkit-text-stroke:0.1px #000;">₪</div>
<div class="t" id="t86" style="left:893.90px;top:319.69px;font-size:11px;line-height:11px;color:#000;font-weight:400;font-family:'Liberation Sans', sans-serif;">-</div>
<div class="t" id="t87" style="left:916.00px;top:320.82px;font-size:11.2px;line-height:11.2px;color:#000;font-weight:400;font-family:'Liberation Sans', sans-serif;-webkit-text-stroke:0.1px #000;">₪</div>
<div class="t" id="t88" style="left:1000.00px;top:319.69px;font-size:11px;line-height:11px;color:#000;font-weight:400;font-family:'Liberation Sans', sans-serif;">-</div>
<div class="t" id="t89" style="left:1074.26px;top:320.04px;font-size:12px;line-height:12px;color:#000;font-weight:400;font-family:'Liberation Sans', sans-serif;">0</div>
<div class="t" id="t90" style="left:1198.83px;top:320.04px;font-size:12px;line-height:12px;color:#000;font-weight:400;font-family:'Liberation Sans', sans-serif;direction:rtl;unicode-bidi:embed;">מוצר 2</div>
<div class="t" id="t91" style="left:474.70px;top:336.82px;font-size:11.2px;line-height:11.2px;color:#000;font-weight:400;font-family:'Liberation Sans', sans-serif;-webkit-text-stroke:0.1px #000;">₪</div>
<div class="t" id="t92" style="left:558.60px;top:335.69px;font-size:11px;line-height:11px;color:#000;font-weight:400;font-family:'Liberation Sans', sans-serif;">-</div>
<div class="t" id="t93" style="left:594.60px;top:336.82px;font-size:11.2px;line-height:11.2px;color:#000;font-weight:400;font-family:'Liberation Sans', sans-serif;-webkit-text-stroke:0.1px #000;">₪</div>
<div class="t" id="t94" style="left:738.90px;top:335.69px;font-size:11px;line-height:11px;color:#000;font-weight:400;font-family:'Liberation Sans', sans-serif;">-</div>
<div class="t" id="t95" style="left:762.00px;top:336.82px;font-size:11.2px;line-height:11.2px;color:#000;font-weight:400;font-family:'Liberation Sans', sans-serif;-webkit-text-stroke:0.1px #000;">₪</div>
<div class="t" id="t96" style="left:893.90px;top:335.69px;font-size:11px;line-height:11px;color:#000;font-weight:400;font-family:'Liberation Sans', sans-serif;">-</div>
<div class="t" id="t97" style="left:916.00px;top:336.82px;font-size:11.2px;line-height:11.2px;color:#000;font-weight:400;font-family:'Liberation Sans', sans-serif;-webkit-text-stroke:0.1px #000;">₪</div>
<div class="t" id="t98" style="left:1000.00px;top:335.69px;font-size:11px;line-height:11px;color:#000;font-weight:400;font-family:'Liberation Sans', sans-serif;">-</div>
<div class="t" id="t99" style="left:1074.26px;top:336.04px;font-size:12px;line-height:12px;color:#000;font-weight:400;font-family:'Liberation Sans', sans-serif;">0</div>
<div class="t" id="t100" style="left:1198.83px;top:336.04px;font-size:12px;line-height:12px;color:#000;font-weight:400;font-family:'Liberation Sans', sans-serif;direction:rtl;unicode-bidi:embed;">מוצר 3</div>
<div class="t" id="t101" style="left:474.70px;top:352.82px;font-size:11.2px;line-height:11.2px;color:#000;font-weight:400;font-family:'Liberation Sans', sans-serif;-webkit-text-stroke:0.1px #000;">₪</div>
<div class="t" id="t102" style="left:558.60px;top:351.69px;font-size:11px;line-height:11px;color:#000;font-weight:400;font-family:'Liberation Sans', sans-serif;">-</div>
<div class="t" id="t103" style="left:594.60px;top:352.82px;font-size:11.2px;line-height:11.2px;color:#000;font-weight:400;font-family:'Liberation Sans', sans-serif;-webkit-text-stroke:0.1px #000;">₪</div>
<div class="t" id="t104" style="left:738.90px;top:351.69px;font-size:11px;line-height:11px;color:#000;font-weight:400;font-family:'Liberation Sans', sans-serif;">-</div>
<div class="t" id="t105" style="left:762.00px;top:352.82px;font-size:11.2px;line-height:11.2px;color:#000;font-weight:400;font-family:'Liberation Sans', sans-serif;-webkit-text-stroke:0.1px #000;">₪</div>
<div class="t" id="t106" style="left:893.90px;top:351.69px;font-size:11px;line-height:11px;color:#000;font-weight:400;font-family:'Liberation Sans', sans-serif;">-</div>
<div class="t" id="t107" style="left:916.00px;top:352.82px;font-size:11.2px;line-height:11.2px;color:#000;font-weight:400;font-family:'Liberation Sans', sans-serif;-webkit-text-stroke:0.1px #000;">₪</div>
<div class="t" id="t108" style="left:1000.00px;top:351.69px;font-size:11px;line-height:11px;color:#000;font-weight:400;font-family:'Liberation Sans', sans-serif;">-</div>
<div class="t" id="t109" style="left:1074.26px;top:352.04px;font-size:12px;line-height:12px;color:#000;font-weight:400;font-family:'Liberation Sans', sans-serif;">0</div>
<div class="t" id="t110" style="left:1198.83px;top:352.04px;font-size:12px;line-height:12px;color:#000;font-weight:400;font-family:'Liberation Sans', sans-serif;direction:rtl;unicode-bidi:embed;">מוצר 4</div>
<div class="t" id="t111" style="left:474.70px;top:368.82px;font-size:11.2px;line-height:11.2px;color:#000;font-weight:400;font-family:'Liberation Sans', sans-serif;-webkit-text-stroke:0.1px #000;">₪</div>
<div class="t" id="t112" style="left:558.60px;top:367.69px;font-size:11px;line-height:11px;color:#000;font-weight:400;font-family:'Liberation Sans', sans-serif;">-</div>
<div class="t" id="t113" style="left:594.60px;top:368.82px;font-size:11.2px;line-height:11.2px;color:#000;font-weight:400;font-family:'Liberation Sans', sans-serif;-webkit-text-stroke:0.1px #000;">₪</div>
<div class="t" id="t114" style="left:738.90px;top:367.69px;font-size:11px;line-height:11px;color:#000;font-weight:400;font-family:'Liberation Sans', sans-serif;">-</div>
<div class="t" id="t115" style="left:762.00px;top:368.82px;font-size:11.2px;line-height:11.2px;color:#000;font-weight:400;font-family:'Liberation Sans', sans-serif;-webkit-text-stroke:0.1px #000;">₪</div>
<div class="t" id="t116" style="left:893.90px;top:367.69px;font-size:11px;line-height:11px;color:#000;font-weight:400;font-family:'Liberation Sans', sans-serif;">-</div>
<div class="t" id="t117" style="left:916.00px;top:368.82px;font-size:11.2px;line-height:11.2px;color:#000;font-weight:400;font-family:'Liberation Sans', sans-serif;-webkit-text-stroke:0.1px #000;">₪</div>
<div class="t" id="t118" style="left:1000.00px;top:367.69px;font-size:11px;line-height:11px;color:#000;font-weight:400;font-family:'Liberation Sans', sans-serif;">-</div>
<div class="t" id="t119" style="left:1074.26px;top:368.04px;font-size:12px;line-height:12px;color:#000;font-weight:400;font-family:'Liberation Sans', sans-serif;">0</div>
<div class="t" id="t120" style="left:1198.83px;top:368.04px;font-size:12px;line-height:12px;color:#000;font-weight:400;font-family:'Liberation Sans', sans-serif;direction:rtl;unicode-bidi:embed;">מוצר 5</div>
<div class="t" id="t121" style="left:474.70px;top:384.82px;font-size:11.2px;line-height:11.2px;color:#000;font-weight:400;font-family:'Liberation Sans', sans-serif;-webkit-text-stroke:0.1px #000;">₪</div>
<div class="t" id="t122" style="left:558.60px;top:383.69px;font-size:11px;line-height:11px;color:#000;font-weight:400;font-family:'Liberation Sans', sans-serif;">-</div>
<div class="t" id="t123" style="left:594.60px;top:384.82px;font-size:11.2px;line-height:11.2px;color:#000;font-weight:400;font-family:'Liberation Sans', sans-serif;-webkit-text-stroke:0.1px #000;">₪</div>
<div class="t" id="t124" style="left:738.90px;top:383.69px;font-size:11px;line-height:11px;color:#000;font-weight:400;font-family:'Liberation Sans', sans-serif;">-</div>
<div class="t" id="t125" style="left:762.00px;top:384.82px;font-size:11.2px;line-height:11.2px;color:#000;font-weight:400;font-family:'Liberation Sans', sans-serif;-webkit-text-stroke:0.1px #000;">₪</div>
<div class="t" id="t126" style="left:893.90px;top:383.69px;font-size:11px;line-height:11px;color:#000;font-weight:400;font-family:'Liberation Sans', sans-serif;">-</div>
<div class="t" id="t127" style="left:916.00px;top:384.82px;font-size:11.2px;line-height:11.2px;color:#000;font-weight:400;font-family:'Liberation Sans', sans-serif;-webkit-text-stroke:0.1px #000;">₪</div>
<div class="t" id="t128" style="left:1000.00px;top:383.69px;font-size:11px;line-height:11px;color:#000;font-weight:400;font-family:'Liberation Sans', sans-serif;">-</div>
<div class="t" id="t129" style="left:1074.26px;top:384.04px;font-size:12px;line-height:12px;color:#000;font-weight:400;font-family:'Liberation Sans', sans-serif;">0</div>
<div class="t" id="t130" style="left:1198.83px;top:384.04px;font-size:12px;line-height:12px;color:#000;font-weight:400;font-family:'Liberation Sans', sans-serif;direction:rtl;unicode-bidi:embed;">מוצר 6</div>
<div class="t" id="t131" style="left:474.70px;top:400.82px;font-size:11.2px;line-height:11.2px;color:#000;font-weight:400;font-family:'Liberation Sans', sans-serif;-webkit-text-stroke:0.1px #000;">₪</div>
<div class="t" id="t132" style="left:558.60px;top:399.69px;font-size:11px;line-height:11px;color:#000;font-weight:400;font-family:'Liberation Sans', sans-serif;">-</div>
<div class="t" id="t133" style="left:594.60px;top:400.82px;font-size:11.2px;line-height:11.2px;color:#000;font-weight:400;font-family:'Liberation Sans', sans-serif;-webkit-text-stroke:0.1px #000;">₪</div>
<div class="t" id="t134" style="left:738.90px;top:399.69px;font-size:11px;line-height:11px;color:#000;font-weight:400;font-family:'Liberation Sans', sans-serif;">-</div>
<div class="t" id="t135" style="left:762.00px;top:400.82px;font-size:11.2px;line-height:11.2px;color:#000;font-weight:400;font-family:'Liberation Sans', sans-serif;-webkit-text-stroke:0.1px #000;">₪</div>
<div class="t" id="t136" style="left:893.90px;top:399.69px;font-size:11px;line-height:11px;color:#000;font-weight:400;font-family:'Liberation Sans', sans-serif;">-</div>
<div class="t" id="t137" style="left:916.00px;top:400.82px;font-size:11.2px;line-height:11.2px;color:#000;font-weight:400;font-family:'Liberation Sans', sans-serif;-webkit-text-stroke:0.1px #000;">₪</div>
<div class="t" id="t138" style="left:1000.00px;top:399.69px;font-size:11px;line-height:11px;color:#000;font-weight:400;font-family:'Liberation Sans', sans-serif;">-</div>
<div class="t" id="t139" style="left:1074.26px;top:400.04px;font-size:12px;line-height:12px;color:#000;font-weight:400;font-family:'Liberation Sans', sans-serif;">0</div>
<div class="t" id="t140" style="left:1198.83px;top:400.04px;font-size:12px;line-height:12px;color:#000;font-weight:400;font-family:'Liberation Sans', sans-serif;direction:rtl;unicode-bidi:embed;">מוצר 7</div>
<div class="t" id="t141" style="left:474.70px;top:416.82px;font-size:11.2px;line-height:11.2px;color:#000;font-weight:400;font-family:'Liberation Sans', sans-serif;-webkit-text-stroke:0.1px #000;">₪</div>
<div class="t" id="t142" style="left:558.60px;top:415.69px;font-size:11px;line-height:11px;color:#000;font-weight:400;font-family:'Liberation Sans', sans-serif;">-</div>
<div class="t" id="t143" style="left:594.60px;top:416.82px;font-size:11.2px;line-height:11.2px;color:#000;font-weight:400;font-family:'Liberation Sans', sans-serif;-webkit-text-stroke:0.1px #000;">₪</div>
<div class="t" id="t144" style="left:738.90px;top:415.69px;font-size:11px;line-height:11px;color:#000;font-weight:400;font-family:'Liberation Sans', sans-serif;">-</div>
<div class="t" id="t145" style="left:762.00px;top:416.82px;font-size:11.2px;line-height:11.2px;color:#000;font-weight:400;font-family:'Liberation Sans', sans-serif;-webkit-text-stroke:0.1px #000;">₪</div>
<div class="t" id="t146" style="left:893.90px;top:415.69px;font-size:11px;line-height:11px;color:#000;font-weight:400;font-family:'Liberation Sans', sans-serif;">-</div>
<div class="t" id="t147" style="left:916.00px;top:416.82px;font-size:11.2px;line-height:11.2px;color:#000;font-weight:400;font-family:'Liberation Sans', sans-serif;-webkit-text-stroke:0.1px #000;">₪</div>
<div class="t" id="t148" style="left:1000.00px;top:415.69px;font-size:11px;line-height:11px;color:#000;font-weight:400;font-family:'Liberation Sans', sans-serif;">-</div>
<div class="t" id="t149" style="left:1074.26px;top:416.04px;font-size:12px;line-height:12px;color:#000;font-weight:400;font-family:'Liberation Sans', sans-serif;">0</div>
<div class="t" id="t150" style="left:1198.83px;top:416.04px;font-size:12px;line-height:12px;color:#000;font-weight:400;font-family:'Liberation Sans', sans-serif;direction:rtl;unicode-bidi:embed;">מוצר 8</div>
<div class="t" id="t151" style="left:474.70px;top:432.82px;font-size:11.2px;line-height:11.2px;color:#000;font-weight:400;font-family:'Liberation Sans', sans-serif;-webkit-text-stroke:0.1px #000;">₪</div>
<div class="t" id="t152" style="left:558.60px;top:431.69px;font-size:11px;line-height:11px;color:#000;font-weight:400;font-family:'Liberation Sans', sans-serif;">-</div>
<div class="t" id="t153" style="left:594.60px;top:432.82px;font-size:11.2px;line-height:11.2px;color:#000;font-weight:400;font-family:'Liberation Sans', sans-serif;-webkit-text-stroke:0.1px #000;">₪</div>
<div class="t" id="t154" style="left:738.90px;top:431.69px;font-size:11px;line-height:11px;color:#000;font-weight:400;font-family:'Liberation Sans', sans-serif;">-</div>
<div class="t" id="t155" style="left:762.00px;top:432.82px;font-size:11.2px;line-height:11.2px;color:#000;font-weight:400;font-family:'Liberation Sans', sans-serif;-webkit-text-stroke:0.1px #000;">₪</div>
<div class="t" id="t156" style="left:893.90px;top:431.69px;font-size:11px;line-height:11px;color:#000;font-weight:400;font-family:'Liberation Sans', sans-serif;">-</div>
<div class="t" id="t157" style="left:916.00px;top:432.82px;font-size:11.2px;line-height:11.2px;color:#000;font-weight:400;font-family:'Liberation Sans', sans-serif;-webkit-text-stroke:0.1px #000;">₪</div>
<div class="t" id="t158" style="left:1000.00px;top:431.69px;font-size:11px;line-height:11px;color:#000;font-weight:400;font-family:'Liberation Sans', sans-serif;">-</div>
<div class="t" id="t159" style="left:1074.26px;top:432.04px;font-size:12px;line-height:12px;color:#000;font-weight:400;font-family:'Liberation Sans', sans-serif;">0</div>
<div class="t" id="t160" style="left:1198.83px;top:432.04px;font-size:12px;line-height:12px;color:#000;font-weight:400;font-family:'Liberation Sans', sans-serif;direction:rtl;unicode-bidi:embed;">מוצר 9</div>
<div class="t" id="t161" style="left:474.70px;top:448.82px;font-size:11.2px;line-height:11.2px;color:#000;font-weight:400;font-family:'Liberation Sans', sans-serif;-webkit-text-stroke:0.1px #000;">₪</div>
<div class="t" id="t162" style="left:558.60px;top:447.69px;font-size:11px;line-height:11px;color:#000;font-weight:400;font-family:'Liberation Sans', sans-serif;">-</div>
<div class="t" id="t163" style="left:594.60px;top:448.82px;font-size:11.2px;line-height:11.2px;color:#000;font-weight:400;font-family:'Liberation Sans', sans-serif;-webkit-text-stroke:0.1px #000;">₪</div>
<div class="t" id="t164" style="left:738.90px;top:447.69px;font-size:11px;line-height:11px;color:#000;font-weight:400;font-family:'Liberation Sans', sans-serif;">-</div>
<div class="t" id="t165" style="left:762.00px;top:448.82px;font-size:11.2px;line-height:11.2px;color:#000;font-weight:400;font-family:'Liberation Sans', sans-serif;-webkit-text-stroke:0.1px #000;">₪</div>
<div class="t" id="t166" style="left:893.90px;top:447.69px;font-size:11px;line-height:11px;color:#000;font-weight:400;font-family:'Liberation Sans', sans-serif;">-</div>
<div class="t" id="t167" style="left:916.00px;top:448.82px;font-size:11.2px;line-height:11.2px;color:#000;font-weight:400;font-family:'Liberation Sans', sans-serif;-webkit-text-stroke:0.1px #000;">₪</div>
<div class="t" id="t168" style="left:1000.00px;top:447.69px;font-size:11px;line-height:11px;color:#000;font-weight:400;font-family:'Liberation Sans', sans-serif;">-</div>
<div class="t" id="t169" style="left:1074.26px;top:448.04px;font-size:12px;line-height:12px;color:#000;font-weight:400;font-family:'Liberation Sans', sans-serif;">0</div>
<div class="t" id="t170" style="left:1195.49px;top:448.04px;font-size:12px;line-height:12px;color:#000;font-weight:400;font-family:'Liberation Sans', sans-serif;direction:rtl;unicode-bidi:embed;">מוצר 10</div>
<div class="t" id="t171" style="left:474.70px;top:464.82px;font-size:11.2px;line-height:11.2px;color:#000;font-weight:400;font-family:'Liberation Sans', sans-serif;-webkit-text-stroke:0.1px #000;">₪</div>
<div class="t" id="t172" style="left:558.60px;top:463.69px;font-size:11px;line-height:11px;color:#000;font-weight:400;font-family:'Liberation Sans', sans-serif;">-</div>
<div class="t" id="t173" style="left:594.60px;top:464.82px;font-size:11.2px;line-height:11.2px;color:#000;font-weight:400;font-family:'Liberation Sans', sans-serif;-webkit-text-stroke:0.1px #000;">₪</div>
<div class="t" id="t174" style="left:738.90px;top:463.69px;font-size:11px;line-height:11px;color:#000;font-weight:400;font-family:'Liberation Sans', sans-serif;">-</div>
<div class="t" id="t175" style="left:762.00px;top:464.82px;font-size:11.2px;line-height:11.2px;color:#000;font-weight:400;font-family:'Liberation Sans', sans-serif;-webkit-text-stroke:0.1px #000;">₪</div>
<div class="t" id="t176" style="left:893.90px;top:463.69px;font-size:11px;line-height:11px;color:#000;font-weight:400;font-family:'Liberation Sans', sans-serif;">-</div>
<div class="t" id="t177" style="left:916.00px;top:464.82px;font-size:11.2px;line-height:11.2px;color:#000;font-weight:400;font-family:'Liberation Sans', sans-serif;-webkit-text-stroke:0.1px #000;">₪</div>
<div class="t" id="t178" style="left:1000.00px;top:463.69px;font-size:11px;line-height:11px;color:#000;font-weight:400;font-family:'Liberation Sans', sans-serif;">-</div>
<div class="t" id="t179" style="left:1074.26px;top:464.04px;font-size:12px;line-height:12px;color:#000;font-weight:400;font-family:'Liberation Sans', sans-serif;">0</div>
<div class="t" id="t180" style="left:1205.11px;top:464.04px;font-size:12px;line-height:12px;color:#000;font-weight:400;font-family:'Liberation Sans', sans-serif;direction:rtl;unicode-bidi:embed;">כללי</div>
<div class="t" id="t181" style="left:474.70px;top:481.32px;font-size:11.2px;line-height:11.2px;color:#000;font-weight:400;font-family:'Liberation Sans', sans-serif;-webkit-text-stroke:0.1px #000;">₪</div>
<div class="t" id="t182" style="left:558.60px;top:480.19px;font-size:11px;line-height:11px;color:#000;font-weight:400;font-family:'Liberation Sans', sans-serif;">-</div>
<div class="t" id="t183" style="left:648.60px;top:481.07px;font-size:11.5px;line-height:11.5px;color:#000;font-weight:700;font-family:'Liberation Sans', sans-serif;">₪</div>
<div class="t" id="t184" style="left:662.20px;top:479.37px;font-size:13.5px;line-height:13.5px;color:#000;font-weight:700;font-family:'Liberation Serif', serif;transform:scaleX(0.9947);">0.00</div>
<div class="t" id="t185" style="left:808.90px;top:481.07px;font-size:11.5px;line-height:11.5px;color:#000;font-weight:700;font-family:'Liberation Sans', sans-serif;">₪</div>
<div class="t" id="t186" style="left:822.50px;top:479.37px;font-size:13.5px;line-height:13.5px;color:#000;font-weight:700;font-family:'Liberation Serif', serif;transform:scaleX(0.9947);">0.00</div>
<div class="t" id="t187" style="left:939.60px;top:481.07px;font-size:11.5px;line-height:11.5px;color:#000;font-weight:700;font-family:'Liberation Sans', sans-serif;">₪</div>
<div class="t" id="t188" style="left:953.20px;top:479.37px;font-size:13.5px;line-height:13.5px;color:#000;font-weight:700;font-family:'Liberation Serif', serif;transform:scaleX(0.9947);">0.00</div>
<div class="t" id="t189" style="left:1074.12px;top:480.22px;font-size:12.5px;line-height:12.5px;color:#000;font-weight:700;font-family:'Liberation Sans', sans-serif;">0</div>
<div class="t" id="t190" style="left:1201.95px;top:479.92px;font-size:12.5px;line-height:12.5px;color:#000;font-weight:700;font-family:'Liberation Sans', sans-serif;transform:scaleX(0.9849);">Total</div>
<div style="position:absolute;left:0;top:0;width:1374px;height:686px;overflow:hidden;">
<div style="position:absolute;left:468px;top:524px;width:820px;height:1px;background:#000;"></div>
<div style="position:absolute;left:468px;top:525px;width:820px;height:16px;background:#c6e0b4;"></div>
<div style="position:absolute;left:468px;top:541px;width:820px;height:1px;background:#000;"></div>
<div style="position:absolute;left:468px;top:542px;width:820px;height:31px;background:#4472c4;"></div>
<div style="position:absolute;left:468px;top:573px;width:820px;height:1px;background:#000;"></div>
<div style="position:absolute;left:468px;top:574px;width:677px;height:15px;background:#ddebf7;"></div>
<div style="position:absolute;left:1144px;top:574px;width:144px;height:15px;background:#c6e0b4;"></div>
<div style="position:absolute;left:468px;top:589px;width:820px;height:1px;background:#000;"></div>
<div style="position:absolute;left:468px;top:590px;width:677px;height:15px;background:#ddebf7;"></div>
<div style="position:absolute;left:1144px;top:590px;width:144px;height:15px;background:#c6e0b4;"></div>
<div style="position:absolute;left:468px;top:605px;width:820px;height:1px;background:#000;"></div>
<div style="position:absolute;left:468px;top:606px;width:677px;height:15px;background:#ddebf7;"></div>
<div style="position:absolute;left:1144px;top:606px;width:144px;height:15px;background:#c6e0b4;"></div>
<div style="position:absolute;left:468px;top:621px;width:820px;height:1px;background:#000;"></div>
<div style="position:absolute;left:468px;top:622px;width:677px;height:15px;background:#ddebf7;"></div>
<div style="position:absolute;left:1144px;top:622px;width:144px;height:15px;background:#c6e0b4;"></div>
<div style="position:absolute;left:468px;top:637px;width:820px;height:1px;background:#000;"></div>
<div style="position:absolute;left:468px;top:638px;width:677px;height:15px;background:#ddebf7;"></div>
<div style="position:absolute;left:1144px;top:638px;width:144px;height:15px;background:#c6e0b4;"></div>
<div style="position:absolute;left:468px;top:653px;width:820px;height:1px;background:#000;"></div>
<div style="position:absolute;left:468px;top:654px;width:677px;height:15px;background:#ddebf7;"></div>
<div style="position:absolute;left:1144px;top:654px;width:144px;height:15px;background:#c6e0b4;"></div>
<div style="position:absolute;left:468px;top:669px;width:820px;height:1px;background:#000;"></div>
<div style="position:absolute;left:468px;top:670px;width:677px;height:15px;background:#ddebf7;"></div>
<div style="position:absolute;left:1144px;top:670px;width:144px;height:15px;background:#c6e0b4;"></div>
<div style="position:absolute;left:468px;top:685px;width:820px;height:1px;background:#000;"></div>
<div style="position:absolute;left:468px;top:686px;width:677px;height:15px;background:#ddebf7;"></div>
<div style="position:absolute;left:1144px;top:686px;width:144px;height:15px;background:#c6e0b4;"></div>
<div style="position:absolute;left:468px;top:701px;width:820px;height:1px;background:#000;"></div>
<div style="position:absolute;left:468px;top:702px;width:677px;height:15px;background:#ddebf7;"></div>
<div style="position:absolute;left:1144px;top:702px;width:144px;height:15px;background:#c6e0b4;"></div>
<div style="position:absolute;left:468px;top:717px;width:820px;height:1px;background:#000;"></div>
<div style="position:absolute;left:468px;top:718px;width:677px;height:15px;background:#ddebf7;"></div>
<div style="position:absolute;left:1144px;top:718px;width:144px;height:15px;background:#c6e0b4;"></div>
<div style="position:absolute;left:468px;top:733px;width:820px;height:1px;background:#000;"></div>
<div style="position:absolute;left:468px;top:734px;width:677px;height:15px;background:#ddebf7;"></div>
<div style="position:absolute;left:1144px;top:734px;width:144px;height:15px;background:#c6e0b4;"></div>
<div style="position:absolute;left:468px;top:749px;width:820px;height:1px;background:#000;"></div>
<div style="position:absolute;left:468px;top:541px;width:1px;height:209px;background:#000;"></div>
<div style="position:absolute;left:584px;top:541px;width:1px;height:209px;background:#000;"></div>
<div style="position:absolute;left:751px;top:541px;width:1px;height:209px;background:#000;"></div>
<div style="position:absolute;left:905px;top:541px;width:1px;height:209px;background:#000;"></div>
<div style="position:absolute;left:1011px;top:541px;width:1px;height:209px;background:#000;"></div>
<div style="position:absolute;left:1144px;top:541px;width:1px;height:209px;background:#000;"></div>
<div style="position:absolute;left:1287px;top:541px;width:1px;height:209px;background:#000;"></div>
<div style="position:absolute;left:468px;top:524px;width:1px;height:17px;background:#000;"></div>
<div style="position:absolute;left:1287px;top:524px;width:1px;height:17px;background:#000;"></div>
<div class="t" id="t191" style="left:854.70px;top:528.42px;font-size:12.5px;line-height:12.5px;color:#000;font-weight:700;font-family:'Liberation Sans', sans-serif;transform:scaleX(0.9574);">2/1/2023</div>
<div class="t" id="t192" style="left:480.90px;top:552.66px;font-size:12.8px;line-height:12.8px;color:#ffffff;font-weight:700;font-family:'Liberation Sans', sans-serif;direction:rtl;unicode-bidi:embed;transform:scaleX(0.8430);">סה"כ הכנסות+ צפי</div>
<div class="t" id="t193" style="left:598.80px;top:552.66px;font-size:12.8px;line-height:12.8px;color:#ffffff;font-weight:700;font-family:'Liberation Sans', sans-serif;direction:rtl;unicode-bidi:embed;transform:scaleX(0.8391);">סכום עסקאות שנעשו החודש</div>
<div class="t" id="t194" style="left:766.50px;top:544.66px;font-size:12.8px;line-height:12.8px;color:#ffffff;font-weight:700;font-family:'Liberation Sans', sans-serif;direction:rtl;unicode-bidi:embed;transform:scaleX(0.8345);">סה"כ צפי הכנסות שצפויות</div>
<div class="t" id="t195" style="left:795.50px;top:560.66px;font-size:12.8px;line-height:12.8px;color:#ffffff;font-weight:700;font-family:'Liberation Sans', sans-serif;direction:rtl;unicode-bidi:embed;transform:scaleX(0.8297);">להכנס החודש</div>
<div class="t" id="t196" style="left:925.50px;top:552.66px;font-size:12.8px;line-height:12.8px;color:#ffffff;font-weight:700;font-family:'Liberation Sans', sans-serif;direction:rtl;unicode-bidi:embed;transform:scaleX(0.8476);">סה"כ הכנסות</div>
<div class="t" id="t197" style="left:1046.50px;top:552.66px;font-size:12.8px;line-height:12.8px;color:#ffffff;font-weight:700;font-family:'Liberation Sans', sans-serif;direction:rtl;unicode-bidi:embed;transform:scaleX(0.8577);">כמות פעולות</div>
<div class="t" id="t198" style="left:1190.50px;top:552.66px;font-size:12.8px;line-height:12.8px;color:#ffffff;font-weight:700;font-family:'Liberation Sans', sans-serif;transform:scaleX(0.9078);">Column1</div>
<div class="t" id="t199" style="left:474.70px;top:577.82px;font-size:11.2px;line-height:11.2px;color:#000;font-weight:400;font-family:'Liberation Sans', sans-serif;-webkit-text-stroke:0.1px #000;">₪</div>
<div class="t" id="t200" style="left:558.60px;top:576.69px;font-size:11px;line-height:11px;color:#000;font-weight:400;font-family:'Liberation Sans', sans-serif;">-</div>
<div class="t" id="t201" style="left:594.60px;top:577.82px;font-size:11.2px;line-height:11.2px;color:#000;font-weight:400;font-family:'Liberation Sans', sans-serif;-webkit-text-stroke:0.1px #000;">₪</div>
<div class="t" id="t202" style="left:738.90px;top:576.69px;font-size:11px;line-height:11px;color:#000;font-weight:400;font-family:'Liberation Sans', sans-serif;">-</div>
<div class="t" id="t203" style="left:762.00px;top:577.82px;font-size:11.2px;line-height:11.2px;color:#000;font-weight:400;font-family:'Liberation Sans', sans-serif;-webkit-text-stroke:0.1px #000;">₪</div>
<div class="t" id="t204" style="left:893.90px;top:576.69px;font-size:11px;line-height:11px;color:#000;font-weight:400;font-family:'Liberation Sans', sans-serif;">-</div>
<div class="t" id="t205" style="left:916.00px;top:577.82px;font-size:11.2px;line-height:11.2px;color:#000;font-weight:400;font-family:'Liberation Sans', sans-serif;-webkit-text-stroke:0.1px #000;">₪</div>
<div class="t" id="t206" style="left:1000.00px;top:576.69px;font-size:11px;line-height:11px;color:#000;font-weight:400;font-family:'Liberation Sans', sans-serif;">-</div>
<div class="t" id="t207" style="left:1074.26px;top:577.04px;font-size:12px;line-height:12px;color:#000;font-weight:400;font-family:'Liberation Sans', sans-serif;">0</div>
<div class="t" id="t208" style="left:1198.83px;top:577.04px;font-size:12px;line-height:12px;color:#000;font-weight:400;font-family:'Liberation Sans', sans-serif;direction:rtl;unicode-bidi:embed;">מוצר 1</div>
<div class="t" id="t209" style="left:474.70px;top:593.82px;font-size:11.2px;line-height:11.2px;color:#000;font-weight:400;font-family:'Liberation Sans', sans-serif;-webkit-text-stroke:0.1px #000;">₪</div>
<div class="t" id="t210" style="left:558.60px;top:592.69px;font-size:11px;line-height:11px;color:#000;font-weight:400;font-family:'Liberation Sans', sans-serif;">-</div>
<div class="t" id="t211" style="left:594.60px;top:593.82px;font-size:11.2px;line-height:11.2px;color:#000;font-weight:400;font-family:'Liberation Sans', sans-serif;-webkit-text-stroke:0.1px #000;">₪</div>
<div class="t" id="t212" style="left:738.90px;top:592.69px;font-size:11px;line-height:11px;color:#000;font-weight:400;font-family:'Liberation Sans', sans-serif;">-</div>
<div class="t" id="t213" style="left:762.00px;top:593.82px;font-size:11.2px;line-height:11.2px;color:#000;font-weight:400;font-family:'Liberation Sans', sans-serif;-webkit-text-stroke:0.1px #000;">₪</div>
<div class="t" id="t214" style="left:893.90px;top:592.69px;font-size:11px;line-height:11px;color:#000;font-weight:400;font-family:'Liberation Sans', sans-serif;">-</div>
<div class="t" id="t215" style="left:916.00px;top:593.82px;font-size:11.2px;line-height:11.2px;color:#000;font-weight:400;font-family:'Liberation Sans', sans-serif;-webkit-text-stroke:0.1px #000;">₪</div>
<div class="t" id="t216" style="left:1000.00px;top:592.69px;font-size:11px;line-height:11px;color:#000;font-weight:400;font-family:'Liberation Sans', sans-serif;">-</div>
<div class="t" id="t217" style="left:1074.26px;top:593.04px;font-size:12px;line-height:12px;color:#000;font-weight:400;font-family:'Liberation Sans', sans-serif;">0</div>
<div class="t" id="t218" style="left:1198.83px;top:593.04px;font-size:12px;line-height:12px;color:#000;font-weight:400;font-family:'Liberation Sans', sans-serif;direction:rtl;unicode-bidi:embed;">מוצר 2</div>
<div class="t" id="t219" style="left:474.70px;top:609.82px;font-size:11.2px;line-height:11.2px;color:#000;font-weight:400;font-family:'Liberation Sans', sans-serif;-webkit-text-stroke:0.1px #000;">₪</div>
<div class="t" id="t220" style="left:558.60px;top:608.69px;font-size:11px;line-height:11px;color:#000;font-weight:400;font-family:'Liberation Sans', sans-serif;">-</div>
<div class="t" id="t221" style="left:594.60px;top:609.82px;font-size:11.2px;line-height:11.2px;color:#000;font-weight:400;font-family:'Liberation Sans', sans-serif;-webkit-text-stroke:0.1px #000;">₪</div>
<div class="t" id="t222" style="left:738.90px;top:608.69px;font-size:11px;line-height:11px;color:#000;font-weight:400;font-family:'Liberation Sans', sans-serif;">-</div>
<div class="t" id="t223" style="left:762.00px;top:609.82px;font-size:11.2px;line-height:11.2px;color:#000;font-weight:400;font-family:'Liberation Sans', sans-serif;-webkit-text-stroke:0.1px #000;">₪</div>
<div class="t" id="t224" style="left:893.90px;top:608.69px;font-size:11px;line-height:11px;color:#000;font-weight:400;font-family:'Liberation Sans', sans-serif;">-</div>
<div class="t" id="t225" style="left:916.00px;top:609.82px;font-size:11.2px;line-height:11.2px;color:#000;font-weight:400;font-family:'Liberation Sans', sans-serif;-webkit-text-stroke:0.1px #000;">₪</div>
<div class="t" id="t226" style="left:1000.00px;top:608.69px;font-size:11px;line-height:11px;color:#000;font-weight:400;font-family:'Liberation Sans', sans-serif;">-</div>
<div class="t" id="t227" style="left:1074.26px;top:609.04px;font-size:12px;line-height:12px;color:#000;font-weight:400;font-family:'Liberation Sans', sans-serif;">0</div>
<div class="t" id="t228" style="left:1198.83px;top:609.04px;font-size:12px;line-height:12px;color:#000;font-weight:400;font-family:'Liberation Sans', sans-serif;direction:rtl;unicode-bidi:embed;">מוצר 3</div>
<div class="t" id="t229" style="left:474.70px;top:625.82px;font-size:11.2px;line-height:11.2px;color:#000;font-weight:400;font-family:'Liberation Sans', sans-serif;-webkit-text-stroke:0.1px #000;">₪</div>
<div class="t" id="t230" style="left:558.60px;top:624.69px;font-size:11px;line-height:11px;color:#000;font-weight:400;font-family:'Liberation Sans', sans-serif;">-</div>
<div class="t" id="t231" style="left:594.60px;top:625.82px;font-size:11.2px;line-height:11.2px;color:#000;font-weight:400;font-family:'Liberation Sans', sans-serif;-webkit-text-stroke:0.1px #000;">₪</div>
<div class="t" id="t232" style="left:738.90px;top:624.69px;font-size:11px;line-height:11px;color:#000;font-weight:400;font-family:'Liberation Sans', sans-serif;">-</div>
<div class="t" id="t233" style="left:762.00px;top:625.82px;font-size:11.2px;line-height:11.2px;color:#000;font-weight:400;font-family:'Liberation Sans', sans-serif;-webkit-text-stroke:0.1px #000;">₪</div>
<div class="t" id="t234" style="left:893.90px;top:624.69px;font-size:11px;line-height:11px;color:#000;font-weight:400;font-family:'Liberation Sans', sans-serif;">-</div>
<div class="t" id="t235" style="left:916.00px;top:625.82px;font-size:11.2px;line-height:11.2px;color:#000;font-weight:400;font-family:'Liberation Sans', sans-serif;-webkit-text-stroke:0.1px #000;">₪</div>
<div class="t" id="t236" style="left:1000.00px;top:624.69px;font-size:11px;line-height:11px;color:#000;font-weight:400;font-family:'Liberation Sans', sans-serif;">-</div>
<div class="t" id="t237" style="left:1074.26px;top:625.04px;font-size:12px;line-height:12px;color:#000;font-weight:400;font-family:'Liberation Sans', sans-serif;">0</div>
<div class="t" id="t238" style="left:1198.83px;top:625.04px;font-size:12px;line-height:12px;color:#000;font-weight:400;font-family:'Liberation Sans', sans-serif;direction:rtl;unicode-bidi:embed;">מוצר 4</div>
<div class="t" id="t239" style="left:474.70px;top:641.82px;font-size:11.2px;line-height:11.2px;color:#000;font-weight:400;font-family:'Liberation Sans', sans-serif;-webkit-text-stroke:0.1px #000;">₪</div>
<div class="t" id="t240" style="left:558.60px;top:640.69px;font-size:11px;line-height:11px;color:#000;font-weight:400;font-family:'Liberation Sans', sans-serif;">-</div>
<div class="t" id="t241" style="left:594.60px;top:641.82px;font-size:11.2px;line-height:11.2px;color:#000;font-weight:400;font-family:'Liberation Sans', sans-serif;-webkit-text-stroke:0.1px #000;">₪</div>
<div class="t" id="t242" style="left:738.90px;top:640.69px;font-size:11px;line-height:11px;color:#000;font-weight:400;font-family:'Liberation Sans', sans-serif;">-</div>
<div class="t" id="t243" style="left:762.00px;top:641.82px;font-size:11.2px;line-height:11.2px;color:#000;font-weight:400;font-family:'Liberation Sans', sans-serif;-webkit-text-stroke:0.1px #000;">₪</div>
<div class="t" id="t244" style="left:893.90px;top:640.69px;font-size:11px;line-height:11px;color:#000;font-weight:400;font-family:'Liberation Sans', sans-serif;">-</div>
<div class="t" id="t245" style="left:916.00px;top:641.82px;font-size:11.2px;line-height:11.2px;color:#000;font-weight:400;font-family:'Liberation Sans', sans-serif;-webkit-text-stroke:0.1px #000;">₪</div>
<div class="t" id="t246" style="left:1000.00px;top:640.69px;font-size:11px;line-height:11px;color:#000;font-weight:400;font-family:'Liberation Sans', sans-serif;">-</div>
<div class="t" id="t247" style="left:1074.26px;top:641.04px;font-size:12px;line-height:12px;color:#000;font-weight:400;font-family:'Liberation Sans', sans-serif;">0</div>
<div class="t" id="t248" style="left:1198.83px;top:641.04px;font-size:12px;line-height:12px;color:#000;font-weight:400;font-family:'Liberation Sans', sans-serif;direction:rtl;unicode-bidi:embed;">מוצר 5</div>
<div class="t" id="t249" style="left:474.70px;top:657.82px;font-size:11.2px;line-height:11.2px;color:#000;font-weight:400;font-family:'Liberation Sans', sans-serif;-webkit-text-stroke:0.1px #000;">₪</div>
<div class="t" id="t250" style="left:558.60px;top:656.69px;font-size:11px;line-height:11px;color:#000;font-weight:400;font-family:'Liberation Sans', sans-serif;">-</div>
<div class="t" id="t251" style="left:594.60px;top:657.82px;font-size:11.2px;line-height:11.2px;color:#000;font-weight:400;font-family:'Liberation Sans', sans-serif;-webkit-text-stroke:0.1px #000;">₪</div>
<div class="t" id="t252" style="left:738.90px;top:656.69px;font-size:11px;line-height:11px;color:#000;font-weight:400;font-family:'Liberation Sans', sans-serif;">-</div>
<div class="t" id="t253" style="left:762.00px;top:657.82px;font-size:11.2px;line-height:11.2px;color:#000;font-weight:400;font-family:'Liberation Sans', sans-serif;-webkit-text-stroke:0.1px #000;">₪</div>
<div class="t" id="t254" style="left:893.90px;top:656.69px;font-size:11px;line-height:11px;color:#000;font-weight:400;font-family:'Liberation Sans', sans-serif;">-</div>
<div class="t" id="t255" style="left:916.00px;top:657.82px;font-size:11.2px;line-height:11.2px;color:#000;font-weight:400;font-family:'Liberation Sans', sans-serif;-webkit-text-stroke:0.1px #000;">₪</div>
<div class="t" id="t256" style="left:1000.00px;top:656.69px;font-size:11px;line-height:11px;color:#000;font-weight:400;font-family:'Liberation Sans', sans-serif;">-</div>
<div class="t" id="t257" style="left:1074.26px;top:657.04px;font-size:12px;line-height:12px;color:#000;font-weight:400;font-family:'Liberation Sans', sans-serif;">0</div>
<div class="t" id="t258" style="left:1198.83px;top:657.04px;font-size:12px;line-height:12px;color:#000;font-weight:400;font-family:'Liberation Sans', sans-serif;direction:rtl;unicode-bidi:embed;">מוצר 6</div>
<div class="t" id="t259" style="left:474.70px;top:673.82px;font-size:11.2px;line-height:11.2px;color:#000;font-weight:400;font-family:'Liberation Sans', sans-serif;-webkit-text-stroke:0.1px #000;">₪</div>
<div class="t" id="t260" style="left:558.60px;top:672.69px;font-size:11px;line-height:11px;color:#000;font-weight:400;font-family:'Liberation Sans', sans-serif;">-</div>
<div class="t" id="t261" style="left:594.60px;top:673.82px;font-size:11.2px;line-height:11.2px;color:#000;font-weight:400;font-family:'Liberation Sans', sans-serif;-webkit-text-stroke:0.1px #000;">₪</div>
<div class="t" id="t262" style="left:738.90px;top:672.69px;font-size:11px;line-height:11px;color:#000;font-weight:400;font-family:'Liberation Sans', sans-serif;">-</div>
<div class="t" id="t263" style="left:762.00px;top:673.82px;font-size:11.2px;line-height:11.2px;color:#000;font-weight:400;font-family:'Liberation Sans', sans-serif;-webkit-text-stroke:0.1px #000;">₪</div>
<div class="t" id="t264" style="left:893.90px;top:672.69px;font-size:11px;line-height:11px;color:#000;font-weight:400;font-family:'Liberation Sans', sans-serif;">-</div>
<div class="t" id="t265" style="left:916.00px;top:673.82px;font-size:11.2px;line-height:11.2px;color:#000;font-weight:400;font-family:'Liberation Sans', sans-serif;-webkit-text-stroke:0.1px #000;">₪</div>
<div class="t" id="t266" style="left:1000.00px;top:672.69px;font-size:11px;line-height:11px;color:#000;font-weight:400;font-family:'Liberation Sans', sans-serif;">-</div>
<div class="t" id="t267" style="left:1074.26px;top:673.04px;font-size:12px;line-height:12px;color:#000;font-weight:400;font-family:'Liberation Sans', sans-serif;">0</div>
<div class="t" id="t268" style="left:1198.83px;top:673.04px;font-size:12px;line-height:12px;color:#000;font-weight:400;font-family:'Liberation Sans', sans-serif;direction:rtl;unicode-bidi:embed;">מוצר 7</div>
<div style="position:absolute;left:469px;top:556px;width:17px;height:16px;border:1px solid #c9c9c9;border-right-color:#9a9a9a;border-bottom-color:#9a9a9a;background:linear-gradient(#fdfdfd,#e8e8e8);box-sizing:border-box;"></div>
<svg style="left:473px;top:562px" width="9" height="5" viewBox="0 0 9 5"><path d="M0 0 H9 L4.5 4.5 Z" fill="#606060"/></svg>
<div style="position:absolute;left:585px;top:556px;width:17px;height:16px;border:1px solid #c9c9c9;border-right-color:#9a9a9a;border-bottom-color:#9a9a9a;background:linear-gradient(#fdfdfd,#e8e8e8);box-sizing:border-box;"></div>
<svg style="left:589px;top:562px" width="9" height="5" viewBox="0 0 9 5"><path d="M0 0 H9 L4.5 4.5 Z" fill="#606060"/></svg>
<div style="position:absolute;left:752px;top:556px;width:17px;height:16px;border:1px solid #c9c9c9;border-right-color:#9a9a9a;border-bottom-color:#9a9a9a;background:linear-gradient(#fdfdfd,#e8e8e8);box-sizing:border-box;"></div>
<svg style="left:756px;top:562px" width="9" height="5" viewBox="0 0 9 5"><path d="M0 0 H9 L4.5 4.5 Z" fill="#606060"/></svg>
<div style="position:absolute;left:906px;top:556px;width:17px;height:16px;border:1px solid #c9c9c9;border-right-color:#9a9a9a;border-bottom-color:#9a9a9a;background:linear-gradient(#fdfdfd,#e8e8e8);box-sizing:border-box;"></div>
<svg style="left:910px;top:562px" width="9" height="5" viewBox="0 0 9 5"><path d="M0 0 H9 L4.5 4.5 Z" fill="#606060"/></svg>
<div style="position:absolute;left:1012px;top:556px;width:17px;height:16px;border:1px solid #c9c9c9;border-right-color:#9a9a9a;border-bottom-color:#9a9a9a;background:linear-gradient(#fdfdfd,#e8e8e8);box-sizing:border-box;"></div>
<svg style="left:1016px;top:562px" width="9" height="5" viewBox="0 0 9 5"><path d="M0 0 H9 L4.5 4.5 Z" fill="#606060"/></svg>
<div style="position:absolute;left:1145px;top:556px;width:17px;height:16px;border:1px solid #c9c9c9;border-right-color:#9a9a9a;border-bottom-color:#9a9a9a;background:linear-gradient(#fdfdfd,#e8e8e8);box-sizing:border-box;"></div>
<svg style="left:1149px;top:562px" width="9" height="5" viewBox="0 0 9 5"><path d="M0 0 H9 L4.5 4.5 Z" fill="#606060"/></svg>
</div>
<div style="position:absolute;left:8px;top:686px;width:1366px;height:28px;background:#e6e6e6;"></div>
<div style="position:absolute;left:8px;top:714px;width:1366px;height:1px;background:#c8c8c8;"></div>
<div style="position:absolute;left:29px;top:686px;width:1345px;height:1px;background:#a8a8a8;"></div>
<div style="position:absolute;left:29px;top:693px;width:13px;height:13px;border:1px solid #999;background:#fff;"></div>
<svg style="left:34px;top:697px" width="4" height="7" viewBox="0 0 4 7"><path d="M4 0 V7 L0 3.5 Z" fill="#000"/></svg>
<div style="position:absolute;left:43px;top:693px;width:481px;height:15px;background:#f0f0f0;"></div>
<div style="position:absolute;left:76px;top:693px;width:444px;height:13px;border:1px solid #999;background:#fff;"></div>
<div style="position:absolute;left:523px;top:693px;width:13px;height:13px;border:1px solid #999;background:#fff;"></div>
<svg style="left:529px;top:697px" width="4" height="7" viewBox="0 0 4 7"><path d="M0 0 V7 L4 3.5 Z" fill="#000"/></svg>
<div style="position:absolute;left:553px;top:696px;width:2px;height:2px;background:#b0b0b0;"></div>
<div style="position:absolute;left:553px;top:700px;width:2px;height:2px;background:#b0b0b0;"></div>
<div style="position:absolute;left:553px;top:704px;width:2px;height:2px;background:#b0b0b0;"></div>
<svg style="left:584px;top:692px" width="17" height="17" viewBox="0 0 17 17"><circle cx="8.5" cy="8.5" r="7.5" fill="none" stroke="#c4c4c4" stroke-width="1.2"/><path d="M8.5 4.5 V12.5 M4.5 8.5 H12.5" stroke="#c4c4c4" stroke-width="1.2"/></svg>
<div style="position:absolute;left:636px;top:686px;width:144px;height:25px;background:linear-gradient(#ffffff 40%,#ece4f4);border-left:1px solid #c8c8c8;border-right:1px solid #c8c8c8;box-sizing:border-box;"></div>
<div style="position:absolute;left:636px;top:709px;width:144px;height:2px;background:#217346;"></div>
<div class="t" id="t269" style="left:649.60px;top:692.15px;font-size:14px;line-height:14px;color:#1d6b40;font-weight:700;font-family:'Liberation Sans', sans-serif;direction:rtl;unicode-bidi:embed;transform:scaleX(0.9350);">מעקב מכירות חודשי</div>
<div style="position:absolute;left:783px;top:689px;width:83px;height:22px;background:#ffe699;"></div>
<div class="t" id="t270" style="left:795.50px;top:692.15px;font-size:14px;line-height:14px;color:#262626;font-weight:400;font-family:'Liberation Sans', sans-serif;direction:rtl;unicode-bidi:embed;transform:scaleX(0.9479);">רווח-הפסד</div>
<div style="position:absolute;left:871px;top:689px;width:55px;height:22px;background:#b4c6e7;"></div>
<div class="t" id="t271" style="left:882.50px;top:692.15px;font-size:14px;line-height:14px;color:#262626;font-weight:400;font-family:'Liberation Sans', sans-serif;direction:rtl;unicode-bidi:embed;transform:scaleX(0.9412);">תזרים</div>
<div style="position:absolute;left:931px;top:689px;width:99px;height:22px;background:#e2efda;"></div>
<div class="t" id="t272" style="left:944.20px;top:692.15px;font-size:14px;line-height:14px;color:#262626;font-weight:400;font-family:'Liberation Sans', sans-serif;direction:rtl;unicode-bidi:embed;transform:scaleX(0.9676);">הזנת הכנסות</div>
<div style="position:absolute;left:1035px;top:689px;width:98px;height:22px;background:#fce4d6;"></div>
<div class="t" id="t273" style="left:1048.50px;top:692.15px;font-size:14px;line-height:14px;color:#262626;font-weight:400;font-family:'Liberation Sans', sans-serif;direction:rtl;unicode-bidi:embed;transform:scaleX(0.9604);">הזנת הוצאות</div>
<div style="position:absolute;left:1137px;top:689px;width:135px;height:22px;background:#ddebf7;"></div>
<div class="t" id="t274" style="left:1153.00px;top:692.15px;font-size:14px;line-height:14px;color:#262626;font-weight:400;font-family:'Liberation Sans', sans-serif;direction:rtl;unicode-bidi:embed;transform:scaleX(0.9598);">הנחיות ויצירת קשר</div>
<div style="position:absolute;left:867px;top:691px;width:1px;height:19px;background:#a8a8a8;"></div>
<div style="position:absolute;left:927px;top:691px;width:1px;height:19px;background:#a8a8a8;"></div>
<div style="position:absolute;left:1031px;top:691px;width:1px;height:19px;background:#a8a8a8;"></div>
<div style="position:absolute;left:1134px;top:691px;width:1px;height:19px;background:#a8a8a8;"></div>
<div style="position:absolute;left:1274px;top:691px;width:1px;height:19px;background:#a8a8a8;"></div>
<svg style="left:1312px;top:696px" width="5" height="8" viewBox="0 0 5 8"><path d="M5 0 V8 L0 4 Z" fill="#c8c8c8"/></svg>
<svg style="left:1341px;top:696px" width="5" height="8" viewBox="0 0 5 8"><path d="M0 0 V8 L5 4 Z" fill="#c8c8c8"/></svg>
<div style="position:absolute;left:8px;top:715px;width:1366px;height:21px;background:#f3f2f1;"></div>
<div class="t" id="t275" style="left:15.00px;top:719.00px;font-size:13px;line-height:13px;color:#444;font-weight:400;font-family:'Liberation Sans', sans-serif;transform:scaleX(0.8409);">Ready</div>
<div class="t" id="t276" style="left:65.00px;top:719.00px;font-size:13px;line-height:13px;color:#444;font-weight:400;font-family:'Liberation Sans', sans-serif;transform:scaleX(0.8572);">Scroll Lock</div>
<svg style="left:136px;top:719px" width="15" height="13" viewBox="0 0 15 13"><g fill="none" stroke="#444" stroke-width="1"><path d="M0.5 12.5 V0.5 H13.5 V5"/><path d="M0.5 3.5 H13.5"/><path d="M2.5 6 H5 M2.5 8.5 H5 M2.5 11 H5"/><circle cx="10" cy="9" r="3.5"/></g><circle cx="10" cy="9" r="1.6" fill="#444"/></svg>
<svg style="left:168px;top:718px" width="15" height="14" viewBox="0 0 15 14"><g fill="none" stroke="#444" stroke-width="1"><circle cx="7" cy="2" r="1.5"/><path d="M1 4 L5 5 H9 L13 4 M5 5 L6 9 L3 13 M9 5 L8 9 M9 9 L14 14 M14 9 L9 14"/></g></svg>
<div class="t" id="t277" style="left:186.00px;top:719.00px;font-size:13px;line-height:13px;color:#444;font-weight:400;font-family:'Liberation Sans', sans-serif;transform:scaleX(0.8680);">Accessibility: Investigate</div>
<div style="position:absolute;left:1074px;top:714px;width:40px;height:22px;background:#d4d4d4;"></div>
<svg style="left:1087px;top:718px" width="14" height="14" viewBox="0 0 14 14" shape-rendering="crispEdges"><g fill="#444"><rect x="0" y="0" width="1" height="13"/><rect x="0" y="0" width="13" height="1"/><rect x="4" y="0" width="1" height="13"/><rect x="0" y="4" width="13" height="1"/><rect x="8" y="0" width="1" height="13"/><rect x="0" y="8" width="13" height="1"/><rect x="12" y="0" width="1" height="13"/><rect x="0" y="12" width="13" height="1"/></g></svg>
<svg style="left:1127px;top:718px" width="14" height="14" viewBox="0 0 14 14" shape-rendering="crispEdges"><g fill="#444"><rect x="0" y="0" width="14" height="1"/><rect x="0" y="13" width="14" height="1"/><rect x="0" y="0" width="1" height="14"/><rect x="13" y="0" width="1" height="14"/>
<rect x="3" y="2" width="8" height="1"/><rect x="3" y="11" width="8" height="1"/><rect x="3" y="2" width="1" height="10"/><rect x="10" y="2" width="1" height="10"/><rect x="5" y="4" width="4" height="1"/><rect x="5" y="6" width="4" height="1"/><rect x="5" y="8" width="4" height="1"/></g></svg>
<svg style="left:1167px;top:718px" width="14" height="14" viewBox="0 0 14 14" shape-rendering="crispEdges"><g fill="#444"><rect x="0" y="0" width="14" height="1"/><rect x="0" y="13" width="14" height="1"/><rect x="0" y="0" width="1" height="14"/><rect x="13" y="0" width="1" height="14"/>
<rect x="4" y="0" width="1" height="8"/><rect x="8" y="0" width="1" height="8"/><rect x="0" y="7" width="9" height="1"/></g></svg>
<div style="position:absolute;left:1200px;top:724px;width:8px;height:1px;background:#444;"></div>
<div style="position:absolute;left:1213px;top:724px;width:100px;height:1px;background:#777;"></div>
<div style="position:absolute;left:1253px;top:720px;width:5px;height:11px;background:#444;"></div>
<div style="position:absolute;left:1263px;top:721px;width:1px;height:7px;background:#444;"></div>
<div style="position:absolute;left:1318px;top:724px;width:8px;height:1px;background:#444;"></div>
<div style="position:absolute;left:1321.5px;top:720.5px;width:1px;height:8px;background:#444;"></div>
<div class="t" id="t278" style="left:1339.00px;top:719.00px;font-size:13px;line-height:13px;color:#444;font-weight:400;font-family:'Liberation Sans', sans-serif;transform:scaleX(0.8067);">85%</div>
<div style="position:absolute;left:0px;top:736px;width:1374px;height:8px;background:#121212;"></div>
<div style="position:absolute;left:8px;top:736px;width:48px;height:8px;background:#1c1c1c;"></div>
<div style="position:absolute;left:56px;top:736px;width:287px;height:8px;background:#333333;"></div>
<div style="position:absolute;left:343px;top:736px;width:442px;height:8px;background:linear-gradient(90deg,#233a3a,#3c3b2c 40%,#433f30);"></div>
<div style="position:absolute;left:785px;top:736px;width:50px;height:8px;background:#6a695c;"></div>
<div style="position:absolute;left:835px;top:736px;width:340px;height:8px;background:linear-gradient(90deg,#2c3a33,#1e2e2e);"></div>
<div style="position:absolute;left:1175px;top:736px;width:195px;height:8px;background:#1c1e1d;"></div>
<div style="position:absolute;left:1369px;top:736px;width:1px;height:8px;background:#555;"></div>
<div style="position:absolute;left:0;top:736px;width:1374px;height:8px;overflow:hidden;"><div style="position:absolute;left:283px;top:1px;width:28px;height:28px;border-radius:50%;background:#cfcad6;"></div><div style="position:absolute;left:1268px;top:5px;font-size:13px;line-height:13px;color:#fff;font-family:'Liberation Sans',sans-serif;">6:40 PM</div></div>
</body></html>
